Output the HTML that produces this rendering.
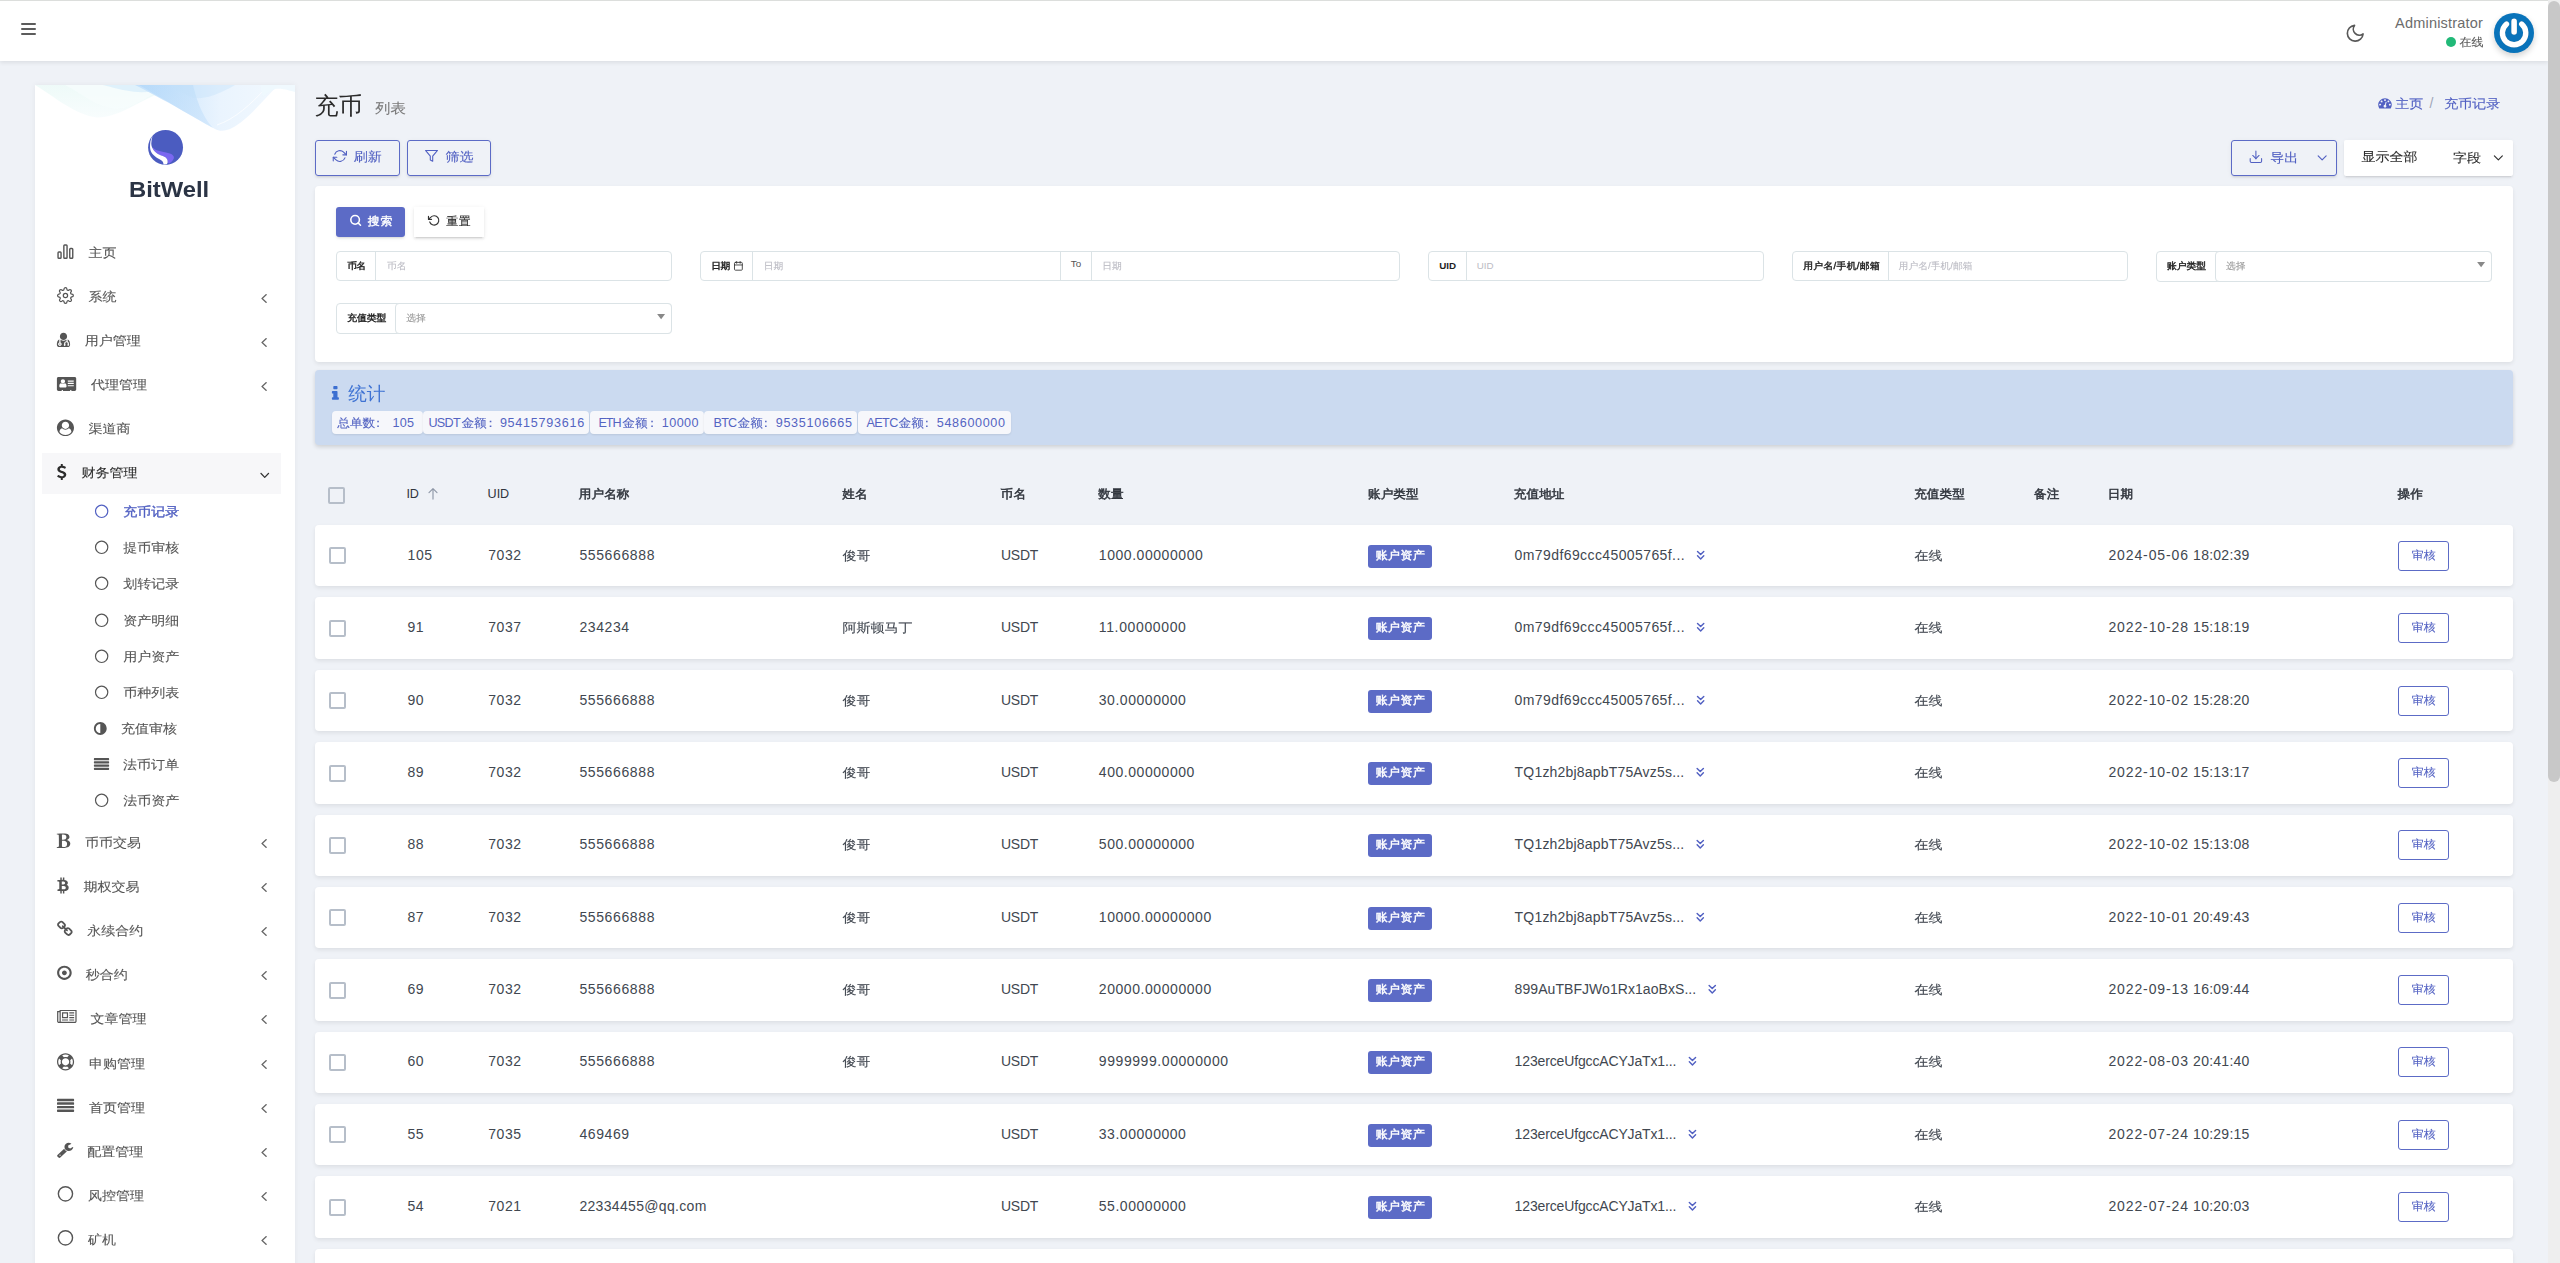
<!DOCTYPE html>
<html lang="zh-CN"><head><meta charset="utf-8"><title>充币</title><style>
html,body{margin:0;padding:0;}
body{width:2560px;height:1263px;overflow:hidden;position:relative;background:#eff2f7;font-family:"Liberation Sans", "WenQuanYi Zen Hei", sans-serif;color:#414750;}
.b{position:absolute;box-sizing:border-box;}
.t{position:absolute;white-space:nowrap;display:block;}
.ic{position:absolute;display:block;overflow:visible;}
.z6{position:absolute;left:0;top:0;width:2560px;height:0;z-index:7;}
</style></head>
<body>
<div class="b" style="left:0.00px;top:0.00px;width:2548.00px;height:61.00px;background:#fff;box-shadow:0 2px 4px 0 rgba(0,0,0,.08);z-index:5;"></div>
<div class="b" style="left:0.00px;top:0.00px;width:2548.00px;height:1.00px;background:#dcdedc;z-index:6;"></div>
<div class="z6">
<div class="b" style="left:21.00px;top:23.00px;width:14.60px;height:2.00px;background:#5c5c5c;border-radius:1px;"></div>
<div class="b" style="left:21.00px;top:28.00px;width:14.60px;height:2.00px;background:#5c5c5c;border-radius:1px;"></div>
<div class="b" style="left:21.00px;top:33.00px;width:14.60px;height:2.00px;background:#5c5c5c;border-radius:1px;"></div>
<svg class="ic" style="left:2343px;top:21px;" width="24" height="24" viewBox="0 0 24 24"><g transform="translate(1.70 1.80) scale(0.8750)" fill="none" stroke="#585858" stroke-width="1.9" stroke-linecap="round" stroke-linejoin="round"><path d="M21 12.79A9 9 0 1 1 11.21 3 7 7 0 0 0 21 12.79z"/></g></svg>
<span class="t" style="top:12.30px;font-size:14.5px;line-height:22px;color:#6c6c6c;right:77.00px;letter-spacing:0.190px;">Administrator</span>
<div class="b" style="left:2446.00px;top:37.00px;width:10.00px;height:10.00px;background:#21b978;border-radius:50%;"></div>
<span class="t" style="top:32.80px;font-size:12px;line-height:18px;color:#5c5c5c;right:76.50px;-webkit-text-stroke:0.12px currentColor;transform:scaleY(0.95);">在线</span>
<div class="b" style="left:2494.00px;top:13.00px;width:40.00px;height:40.00px;background:#0973ba;border-radius:50%;box-shadow:0 3px 6px rgba(0,0,0,.18);"></div>
<svg class="ic" style="left:2494px;top:13px" width="40" height="40" viewBox="0 0 40 40"><g filter="drop-shadow(0.6px 0.8px 0.7px rgba(0,0,0,.35))"><path d="M27.7 11.1 A11.7 11.7 0 1 1 12.5 11.1" fill="none" stroke="#fff" stroke-width="5.4" stroke-linecap="round"/><rect x="17.3" y="5.6" width="5.6" height="16.2" rx="2.8" fill="#fff"/></g></svg>
</div>
<div class="b" style="left:35.00px;top:85.00px;width:260.00px;height:1200.00px;background:#fff;box-shadow:0 0 6px rgba(0,0,0,.06);"></div>
<svg class="ic" style="left:35px;top:85px;overflow:hidden" width="260" height="52" viewBox="0 0 260 52">
<defs><linearGradient id="wg1" x1="0" y1="0" x2="0" y2="1"><stop offset="0" stop-color="#e3f7f4"/><stop offset="1" stop-color="#f3fbfc"/></linearGradient>
<linearGradient id="wg2" x1="0" y1="0" x2="1" y2="0"><stop offset="0" stop-color="#c2e0fb"/><stop offset=".4" stop-color="#dcedfd"/><stop offset=".6" stop-color="#eaf4fe"/><stop offset="1" stop-color="#f1f8fe"/></linearGradient>
<linearGradient id="wg3" x1="0" y1="0" x2="1" y2="1"><stop offset="0" stop-color="#a9d3f8"/><stop offset="1" stop-color="#c4e0fb"/></linearGradient></defs>
<path d="M0 0 C20 12 40 30 62 32.5 C85 32 100 18 125 8 L140 0 Z" fill="url(#wg1)" opacity=".6"/>
<path d="M30 0 C50 10 60 22 82 24 C100 22 108 14 122 7 L132 0 Z" fill="#f6fdfd" opacity=".8"/>
<path d="M68 0 C90 6 105 9 118 6 L128 0 Z" fill="#d6ecfb" opacity=".7"/>
<path d="M100 0 L243 0 C226 18 211 36 197 43 C191 46 185 47 180 44 C160 33 130 15 100 0 Z" fill="url(#wg2)"/>
<path d="M104 0 L158 0 C161 12 166 30 178 43 C160 33 130 15 104 0 Z" fill="url(#wg3)" opacity=".5"/>
<path d="M135 0 L200 0 C185 9 170 14 160 13 C150 10 142 5 135 0 Z" fill="#c3e0fa" opacity=".4"/>
<path d="M182 40 C200 34 215 20 232 2" fill="none" stroke="#fff" stroke-width="0.8" opacity=".9"/>
<path d="M225 0 L260 0 L260 7 C250 4 245 3 240 4 C236 6 232 8 228 12 Z" fill="#eef8fe" opacity=".9"/>
</svg>
<svg class="ic" style="left:147px;top:129px" width="38" height="37" viewBox="0 0 38 37"><g transform="translate(1.10 1.00)"><circle cx="17.45" cy="17.45" r="17.45" fill="#4b5cc0"/>
<path d="M4.7 17.6 C6 19.2 8 20.2 10.5 20.8 C13 21.5 15.5 21.9 17.9 22.4 C20 22.8 21.8 23.2 23.2 23.9 C24.6 24.7 25.5 25.8 25.8 27.1 C25.9 27.9 25.7 28.6 25.3 29.2 C24.8 30.2 24.1 31.1 23.2 31.9 C22.6 32.5 21.9 33 21.1 33.4 L19.5 32.4 C19.7 31.2 19.5 30.2 19 29.2 C18.2 27.8 16.8 26.9 14.8 26.1 C12.5 25.2 10.2 24.3 8.4 22.9 C6.8 21.8 5.5 20.5 4.7 18.7 Z" fill="#7b68f0"/>
<path d="M4.4 6.0 C3.0 8.5 2.2 11 2.1 13.4 C1.9 15.5 1.9 17 2.1 18.7 C2.4 20.8 3.1 22.4 4.4 23.9 C6 25.8 8 27.3 10.5 28.7 C12.5 29.8 14 30.6 14.8 31.9 C15.3 32.8 15.4 33.6 15.3 34.6 L17.9 34.6 C19 33.8 19.6 33.2 19.5 32.4 C19.7 31.2 19.5 30.2 19 29.2 C18.2 27.8 16.8 26.9 14.8 26.1 C12.5 25.2 10.2 24.3 8.4 22.9 C6.8 21.8 5.5 20.5 4.7 18.7 C3.8 17 3.2 15.3 3.2 13.4 C3.3 11 3.7 8.5 4.4 6.0 Z" fill="#fff"/></g></svg>
<span class="t" style="top:174.50px;font-size:21.8px;line-height:30px;color:#2b3445;left:128.90px;font-weight:700;transform:scaleX(1.092);transform-origin:0 50%;">BitWell</span>
<svg class="ic" style="left:55px;top:242px" width="21" height="19" viewBox="0 0 21 19"><g transform="translate(1.65 1.85)"><g fill="none" stroke="#555" stroke-width="1.4"><rect x="1.4" y="8.2" width="3" height="6.2" rx="0.8"/><rect x="7.2" y="1.2" width="3.2" height="13.2" rx="0.8"/><rect x="13.1" y="4.6" width="3" height="9.8" rx="0.8"/></g></g></svg>
<span class="t" style="top:241.80px;font-size:14px;line-height:21px;color:#555;left:88.50px;-webkit-text-stroke:0.12px currentColor;transform:scaleY(0.9);">主页</span>
<svg class="ic" style="left:55px;top:285px;" width="21" height="21" viewBox="0 0 21 21"><g transform="translate(1.85 1.95) scale(0.7167)" fill="none" stroke="#555" stroke-width="1.7" stroke-linecap="round" stroke-linejoin="round"><circle cx="12" cy="12" r="3"/><path d="M19.4 15a1.65 1.65 0 0 0 .33 1.82l.06.06a2 2 0 0 1 0 2.83 2 2 0 0 1-2.83 0l-.06-.06a1.65 1.65 0 0 0-1.82-.33 1.65 1.65 0 0 0-1 1.51V21a2 2 0 0 1-2 2 2 2 0 0 1-2-2v-.09A1.65 1.65 0 0 0 9 19.4a1.65 1.65 0 0 0-1.82.33l-.06.06a2 2 0 0 1-2.83 0 2 2 0 0 1 0-2.83l.06-.06a1.65 1.65 0 0 0 .33-1.82 1.65 1.65 0 0 0-1.51-1H3a2 2 0 0 1-2-2 2 2 0 0 1 2-2h.09A1.65 1.65 0 0 0 4.6 9a1.65 1.65 0 0 0-.33-1.82l-.06-.06a2 2 0 0 1 0-2.83 2 2 0 0 1 2.83 0l.06.06a1.65 1.65 0 0 0 1.82.33H9a1.65 1.65 0 0 0 1-1.51V3a2 2 0 0 1 2-2 2 2 0 0 1 2 2v.09a1.65 1.65 0 0 0 1 1.51 1.65 1.65 0 0 0 1.82-.33l.06-.06a2 2 0 0 1 2.83 0 2 2 0 0 1 0 2.83l-.06.06a1.65 1.65 0 0 0-.33 1.82V9a1.65 1.65 0 0 0 1.51 1H21a2 2 0 0 1 2 2 2 2 0 0 1-2 2h-.09a1.65 1.65 0 0 0-1.51 1z"/></g></svg>
<span class="t" style="top:285.80px;font-size:14px;line-height:21px;color:#555;left:88.50px;-webkit-text-stroke:0.12px currentColor;transform:scaleY(0.9);">系统</span>
<svg class="ic" style="left:260px;top:293px;" width="8" height="11" viewBox="0 0 8 11"><path fill="#666" d="M6.9 1.75C6.9 1.67 6.86 1.6 6.8 1.54L6.32 1.09C6.26 1.04 6.18 1 6.1 1C6.02 1 5.94 1.04 5.88 1.09L1.4 5.29C1.34 5.35 1.3 5.43 1.3 5.5C1.3 5.57 1.34 5.65 1.4 5.71L5.88 9.91C5.94 9.96 6.02 10 6.1 10C6.18 10 6.26 9.96 6.32 9.91L6.8 9.46C6.86 9.4 6.9 9.32 6.9 9.25C6.9 9.18 6.86 9.1 6.8 9.04L3.02 5.5L6.8 1.96C6.86 1.9 6.9 1.82 6.9 1.75Z"/></svg>
<svg class="ic" style="left:55px;top:331px;" width="17" height="18" viewBox="0 0 17 18"><path fill="#555" d="M5.5 13.12C5.5 12.79 5.23 12.53 4.9 12.53C4.57 12.53 4.3 12.79 4.3 13.12C4.3 13.45 4.57 13.72 4.9 13.72C5.23 13.72 5.5 13.45 5.5 13.12ZM15.1 13.69C15.1 11.84 14.72 8.91 12.49 8.43C12.77 9.06 12.7 9.79 12.7 10.47C13.44 10.89 13.9 11.68 13.9 12.53V13.35C14.09 13.52 14.2 13.76 14.2 14.01C14.2 14.51 13.8 14.91 13.3 14.91C12.8 14.91 12.4 14.51 12.4 14.01C12.4 13.76 12.51 13.52 12.7 13.35V12.53C12.7 11.87 12.16 11.33 11.5 11.33C10.84 11.33 10.3 11.87 10.3 12.53V13.35C10.49 13.52 10.6 13.76 10.6 14.01C10.6 14.51 10.2 14.91 9.7 14.91C9.2 14.91 8.8 14.51 8.8 14.01C8.8 13.76 8.91 13.52 9.1 13.35V12.53C9.1 11.21 10.18 10.14 11.5 10.14V9.55C11.5 9.24 11.47 8.93 11.27 8.68C10.48 9.29 9.5 9.65 8.5 9.65C7.5 9.65 6.52 9.29 5.73 8.68C5.53 8.93 5.5 9.24 5.5 9.55V11.44C6.21 11.69 6.7 12.37 6.7 13.12C6.7 14.11 5.89 14.91 4.9 14.91C3.91 14.91 3.1 14.11 3.1 13.12C3.1 12.37 3.58 11.69 4.3 11.44V9.55C4.3 9.16 4.36 8.78 4.51 8.43C2.27 8.91 1.9 11.84 1.9 13.69C1.9 15.21 2.9 16.1 4.4 16.1H12.6C14.1 16.1 15.1 15.21 15.1 13.69ZM12.1 5.38C12.1 3.4 10.49 1.8 8.5 1.8C6.51 1.8 4.9 3.4 4.9 5.38C4.9 7.35 6.51 8.95 8.5 8.95C10.49 8.95 12.1 7.35 12.1 5.38Z"/></svg>
<span class="t" style="top:329.80px;font-size:14px;line-height:21px;color:#555;left:84.80px;-webkit-text-stroke:0.12px currentColor;transform:scaleY(0.9);">用户管理</span>
<svg class="ic" style="left:260px;top:337px;" width="8" height="11" viewBox="0 0 8 11"><path fill="#666" d="M6.9 1.75C6.9 1.67 6.86 1.6 6.8 1.54L6.32 1.09C6.26 1.04 6.18 1 6.1 1C6.02 1 5.94 1.04 5.88 1.09L1.4 5.29C1.34 5.35 1.3 5.43 1.3 5.5C1.3 5.57 1.34 5.65 1.4 5.71L5.88 9.91C5.94 9.96 6.02 10 6.1 10C6.18 10 6.26 9.96 6.32 9.91L6.8 9.46C6.86 9.4 6.9 9.32 6.9 9.25C6.9 9.18 6.86 9.1 6.8 9.04L3.02 5.5L6.8 1.96C6.86 1.9 6.9 1.82 6.9 1.75Z"/></svg>
<svg class="ic" style="left:55px;top:375px;" width="23" height="18" viewBox="0 0 23 18"><path fill="#555" d="M11.55 11.17C11.55 11.98 11.01 12.55 10.34 12.55H5.52C4.85 12.55 4.31 11.98 4.31 11.17C4.31 9.74 4.67 8.15 6.16 8.15C6.62 8.41 7.24 8.85 7.93 8.85C8.62 8.85 9.24 8.41 9.7 8.15C11.19 8.15 11.55 9.74 11.55 11.17ZM10.07 6.37C10.07 7.53 9.11 8.46 7.93 8.46C6.75 8.46 5.79 7.53 5.79 6.37C5.79 5.21 6.75 4.27 7.93 4.27C9.11 4.27 10.07 5.21 10.07 6.37ZM18.79 11.07C18.79 11.24 18.66 11.37 18.49 11.37H13.06C12.89 11.37 12.76 11.24 12.76 11.07V10.48C12.76 10.31 12.89 10.18 13.06 10.18H18.49C18.66 10.18 18.79 10.31 18.79 10.48V11.07ZM18.79 8.67C18.79 8.85 18.64 9 18.45 9H13.1C12.91 9 12.76 8.85 12.76 8.67V8.15C12.76 7.96 12.91 7.82 13.1 7.82H18.45C18.64 7.82 18.79 7.96 18.79 8.15V8.67ZM18.79 6.34C18.79 6.5 18.66 6.63 18.49 6.63H13.06C12.89 6.63 12.76 6.5 12.76 6.34V5.75C12.76 5.58 12.89 5.45 13.06 5.45H18.49C18.66 5.45 18.79 5.58 18.79 5.75V6.34ZM21.2 3.38C21.2 2.57 20.52 1.9 19.69 1.9H3.41C2.58 1.9 1.9 2.57 1.9 3.38V14.62C1.9 15.43 2.58 16.1 3.41 16.1H6.72V15.21C6.72 15.05 6.86 14.92 7.03 14.92H7.63C7.8 14.92 7.93 15.05 7.93 15.21V16.1H15.17V15.21C15.17 15.05 15.3 14.92 15.47 14.92H16.07C16.24 14.92 16.38 15.05 16.38 15.21V16.1H19.69C20.52 16.1 21.2 15.43 21.2 14.62Z"/></svg>
<span class="t" style="top:373.80px;font-size:14px;line-height:21px;color:#555;left:91.00px;-webkit-text-stroke:0.12px currentColor;transform:scaleY(0.9);">代理管理</span>
<svg class="ic" style="left:260px;top:381px;" width="8" height="11" viewBox="0 0 8 11"><path fill="#666" d="M6.9 1.75C6.9 1.67 6.86 1.6 6.8 1.54L6.32 1.09C6.26 1.04 6.18 1 6.1 1C6.02 1 5.94 1.04 5.88 1.09L1.4 5.29C1.34 5.35 1.3 5.43 1.3 5.5C1.3 5.57 1.34 5.65 1.4 5.71L5.88 9.91C5.94 9.96 6.02 10 6.1 10C6.18 10 6.26 9.96 6.32 9.91L6.8 9.46C6.86 9.4 6.9 9.32 6.9 9.25C6.9 9.18 6.86 9.1 6.8 9.04L3.02 5.5L6.8 1.96C6.86 1.9 6.9 1.82 6.9 1.75Z"/></svg>
<svg class="ic" style="left:55px;top:418px;" width="20" height="20" viewBox="0 0 20 20"><path fill="#555" d="M16.43 13.88C15.11 15.7 12.92 16.91 10.45 16.91C7.98 16.91 5.79 15.7 4.47 13.88C4.72 12.14 5.44 10.59 7.06 10.37C7.9 11.27 9.11 11.84 10.45 11.84C11.79 11.84 13 11.27 13.84 10.37C15.46 10.59 16.18 12.14 16.43 13.88ZM14.11 7.36C14.11 9.34 12.47 10.94 10.45 10.94C8.43 10.94 6.79 9.34 6.79 7.36C6.79 5.39 8.43 3.79 10.45 3.79C12.47 3.79 14.11 5.39 14.11 7.36ZM19 9.75C19 5.14 15.17 1.4 10.45 1.4C5.73 1.4 1.9 5.14 1.9 9.75C1.9 14.35 5.73 18.1 10.45 18.1C15.18 18.1 19 14.34 19 9.75Z"/></svg>
<span class="t" style="top:417.80px;font-size:14px;line-height:21px;color:#555;left:88.50px;-webkit-text-stroke:0.12px currentColor;transform:scaleY(0.9);">渠道商</span>
<div class="b" style="left:42.30px;top:453.30px;width:238.50px;height:40.30px;background:#f7f7f9;"></div>
<svg class="ic" style="left:56px;top:462px;" width="12" height="20" viewBox="0 0 12 20"><path fill="#2c2c2c" d="M10.3 12.61C10.3 10.43 8.25 9.7 6.43 9.06C5.03 8.56 3.83 8.14 3.83 7.18C3.83 6.36 4.69 5.79 5.95 5.79C7.43 5.79 8.62 6.75 8.63 6.76C8.71 6.82 8.8 6.84 8.9 6.83C9 6.82 9.08 6.76 9.13 6.68L9.92 5.36C9.99 5.25 9.97 5.12 9.88 5.02C9.84 4.98 8.77 3.99 6.77 3.78V2.19C6.77 2.03 6.63 1.9 6.45 1.9H5.12C4.95 1.9 4.8 2.03 4.8 2.19V3.82C2.74 4.18 1.32 5.55 1.32 7.22C1.32 9.48 3.53 10.3 5.31 10.94C6.64 11.43 7.8 11.85 7.8 12.72C7.8 13.74 6.76 14.21 5.79 14.21C4.04 14.21 2.66 13 2.64 12.99C2.58 12.93 2.49 12.9 2.4 12.91C2.32 12.92 2.23 12.96 2.18 13.02L1.16 14.24C1.07 14.35 1.08 14.5 1.18 14.61C1.23 14.66 2.49 15.93 4.8 16.23V17.81C4.8 17.97 4.95 18.1 5.12 18.1H6.45C6.63 18.1 6.77 17.97 6.77 17.81V16.23C8.86 15.91 10.3 14.46 10.3 12.61Z"/></svg>
<span class="t" style="top:461.80px;font-size:14px;line-height:21px;color:#2c2c2c;left:81.40px;-webkit-text-stroke:0.12px currentColor;transform:scaleY(0.9);">财务管理</span>
<svg class="ic" style="left:259px;top:471px;" width="12" height="9" viewBox="0 0 12 9"><path fill="#333" d="M10.2 2.47C10.2 2.4 10.16 2.31 10.11 2.26L9.66 1.79C9.61 1.74 9.53 1.7 9.46 1.7C9.39 1.7 9.31 1.74 9.25 1.79L5.75 5.44L2.25 1.79C2.19 1.74 2.11 1.7 2.04 1.7C1.96 1.7 1.89 1.74 1.84 1.79L1.39 2.26C1.34 2.31 1.3 2.4 1.3 2.47C1.3 2.54 1.34 2.63 1.39 2.68L5.54 7.01C5.6 7.06 5.68 7.1 5.75 7.1C5.82 7.1 5.9 7.06 5.96 7.01L10.11 2.68C10.16 2.63 10.2 2.54 10.2 2.47Z"/></svg>
<svg class="ic" style="left:91px;top:501px" width="21" height="21" viewBox="0 0 21 21"><g transform="translate(1.65 1.35)"><circle cx="9" cy="9" r="6.15" fill="none" stroke="#5160c2" stroke-width="1.2"/></g></svg>
<span class="t" style="top:500.80px;font-size:14px;line-height:21px;color:#5160c2;left:123.30px;-webkit-text-stroke:0.39px currentColor;transform:scaleY(0.9);">充币记录</span>
<svg class="ic" style="left:91px;top:537px" width="21" height="21" viewBox="0 0 21 21"><g transform="translate(1.65 1.35)"><circle cx="9" cy="9" r="6.15" fill="none" stroke="#555" stroke-width="1.2"/></g></svg>
<span class="t" style="top:536.80px;font-size:14px;line-height:21px;color:#555;left:123.30px;-webkit-text-stroke:0.12px currentColor;transform:scaleY(0.9);">提币审核</span>
<svg class="ic" style="left:91px;top:573px" width="21" height="21" viewBox="0 0 21 21"><g transform="translate(1.65 1.35)"><circle cx="9" cy="9" r="6.15" fill="none" stroke="#555" stroke-width="1.2"/></g></svg>
<span class="t" style="top:572.80px;font-size:14px;line-height:21px;color:#555;left:123.30px;-webkit-text-stroke:0.12px currentColor;transform:scaleY(0.9);">划转记录</span>
<svg class="ic" style="left:91px;top:610px" width="21" height="21" viewBox="0 0 21 21"><g transform="translate(1.65 1.35)"><circle cx="9" cy="9" r="6.15" fill="none" stroke="#555" stroke-width="1.2"/></g></svg>
<span class="t" style="top:609.80px;font-size:14px;line-height:21px;color:#555;left:123.30px;-webkit-text-stroke:0.12px currentColor;transform:scaleY(0.9);">资产明细</span>
<svg class="ic" style="left:91px;top:646px" width="21" height="21" viewBox="0 0 21 21"><g transform="translate(1.65 1.35)"><circle cx="9" cy="9" r="6.15" fill="none" stroke="#555" stroke-width="1.2"/></g></svg>
<span class="t" style="top:645.80px;font-size:14px;line-height:21px;color:#555;left:123.30px;-webkit-text-stroke:0.12px currentColor;transform:scaleY(0.9);">用户资产</span>
<svg class="ic" style="left:91px;top:682px" width="21" height="21" viewBox="0 0 21 21"><g transform="translate(1.65 1.35)"><circle cx="9" cy="9" r="6.15" fill="none" stroke="#555" stroke-width="1.2"/></g></svg>
<span class="t" style="top:681.80px;font-size:14px;line-height:21px;color:#555;left:123.30px;-webkit-text-stroke:0.12px currentColor;transform:scaleY(0.9);">币种列表</span>
<svg class="ic" style="left:92px;top:721px;" width="16" height="15" viewBox="0 0 16 15"><path fill="#555" d="M8.3 12.02C5.8 12.02 3.77 9.97 3.77 7.45C3.77 4.93 5.8 2.88 8.3 2.88V12.02ZM14.7 7.45C14.7 3.89 11.83 1 8.3 1C4.77 1 1.9 3.89 1.9 7.45C1.9 11.01 4.77 13.9 8.3 13.9C11.83 13.9 14.7 11.01 14.7 7.45Z"/></svg>
<span class="t" style="top:717.80px;font-size:14px;line-height:21px;color:#555;left:120.90px;-webkit-text-stroke:0.12px currentColor;transform:scaleY(0.9);">充值审核</span>
<svg class="ic" style="left:92px;top:757px;" width="19" height="14" viewBox="0 0 19 14"><path fill="#555" d="M17.1 11.29C17.1 11 16.85 10.75 16.56 10.75H2.44C2.15 10.75 1.9 11 1.9 11.29V12.36C1.9 12.66 2.15 12.9 2.44 12.9H16.56C16.85 12.9 17.1 12.66 17.1 12.36ZM17.1 8.07C17.1 7.78 16.85 7.54 16.56 7.54H2.44C2.15 7.54 1.9 7.78 1.9 8.07V9.15C1.9 9.44 2.15 9.68 2.44 9.68H16.56C16.85 9.68 17.1 9.44 17.1 9.15ZM17.1 4.85C17.1 4.56 16.85 4.32 16.56 4.32H2.44C2.15 4.32 1.9 4.56 1.9 4.85V5.93C1.9 6.22 2.15 6.46 2.44 6.46H16.56C16.85 6.46 17.1 6.22 17.1 5.93ZM17.1 1.64C17.1 1.34 16.85 1.1 16.56 1.1H2.44C2.15 1.1 1.9 1.34 1.9 1.64V2.71C1.9 3 2.15 3.25 2.44 3.25H16.56C16.85 3.25 17.1 3 17.1 2.71Z"/></svg>
<span class="t" style="top:753.80px;font-size:14px;line-height:21px;color:#555;left:123.00px;-webkit-text-stroke:0.12px currentColor;transform:scaleY(0.9);">法币订单</span>
<svg class="ic" style="left:91px;top:790px" width="21" height="21" viewBox="0 0 21 21"><g transform="translate(1.65 1.35)"><circle cx="9" cy="9" r="6.15" fill="none" stroke="#555" stroke-width="1.2"/></g></svg>
<span class="t" style="top:789.80px;font-size:14px;line-height:21px;color:#555;left:123.30px;-webkit-text-stroke:0.12px currentColor;transform:scaleY(0.9);">法币资产</span>
<svg class="ic" style="left:55px;top:832px;" width="17" height="18" viewBox="0 0 17 18"><path fill="#555" d="M7.12 14.75C6.89 14.2 6.98 12.44 6.98 11.79C6.98 10.79 6.99 9.79 6.99 8.79C7.26 8.7 7.67 8.7 7.96 8.7C9.5 8.7 10.78 8.77 11.68 10.19C11.99 10.69 12.07 11.3 12.07 11.89C12.07 14.19 10.65 15.05 8.46 15.05C8 15.05 7.54 14.93 7.12 14.75ZM6.99 7.71C6.98 7.49 6.98 7.27 6.98 7.06C6.98 6.56 6.99 6.06 6.99 5.56C6.99 4.6 6.91 3.65 6.91 2.7C7.32 2.63 7.74 2.57 8.16 2.57C9.76 2.57 11.42 3.2 11.42 5.05C11.42 7.23 10.01 7.77 8.03 7.77C7.69 7.77 7.33 7.76 6.99 7.71ZM1.8 16.1C3.51 16.03 5.24 15.88 6.96 15.88C7.8 15.88 8.65 15.94 9.49 15.94C12.3 15.94 15.3 14.86 15.3 11.62C15.3 9.63 13.68 8.42 11.86 8.01C13.21 7.41 14.51 6.77 14.51 5.08C14.51 2.63 12.13 1.61 9.96 1.61C9.53 1.61 9.09 1.6 8.66 1.6C6.38 1.6 4.1 1.76 1.82 1.8L1.86 2.58C2.17 2.62 3.58 2.69 3.73 2.96C3.96 3.4 3.94 12.43 3.94 12.64C3.94 13.27 3.99 14.25 3.65 14.81C3.06 15.05 2.43 15.06 1.82 15.21L1.8 16.1Z"/></svg>
<span class="t" style="top:831.80px;font-size:14px;line-height:21px;color:#555;left:85.00px;-webkit-text-stroke:0.12px currentColor;transform:scaleY(0.9);">币币交易</span>
<svg class="ic" style="left:260px;top:838px;" width="8" height="11" viewBox="0 0 8 11"><path fill="#666" d="M6.9 1.75C6.9 1.67 6.86 1.6 6.8 1.54L6.32 1.09C6.26 1.04 6.18 1 6.1 1C6.02 1 5.94 1.04 5.88 1.09L1.4 5.29C1.34 5.35 1.3 5.43 1.3 5.5C1.3 5.57 1.34 5.65 1.4 5.71L5.88 9.91C5.94 9.96 6.02 10 6.1 10C6.18 10 6.26 9.96 6.32 9.91L6.8 9.46C6.86 9.4 6.9 9.32 6.9 9.25C6.9 9.18 6.86 9.1 6.8 9.04L3.02 5.5L6.8 1.96C6.86 1.9 6.9 1.82 6.9 1.75Z"/></svg>
<svg class="ic" style="left:56px;top:876px;" width="14" height="19" viewBox="0 0 14 19"><path fill="#555" d="M11.84 6.42C11.68 4.67 10.21 4.09 8.35 3.92V1.5H6.9V3.86C6.52 3.86 6.14 3.87 5.75 3.88V1.5H4.3V3.92C3.99 3.93 3.68 3.93 3.39 3.93L1.4 3.92V5.5C2.46 5.48 2.44 5.5 2.44 5.5C3.04 5.5 3.22 5.85 3.28 6.15V8.91C3.32 8.91 3.37 8.91 3.43 8.92C3.38 8.92 3.33 8.92 3.28 8.92V12.79C3.25 12.98 3.14 13.28 2.73 13.28C2.73 13.28 2.75 13.3 1.69 13.28L1.4 15.04H3.28C3.63 15.04 3.97 15.05 4.3 15.05V17.5H5.75V15.08C6.15 15.09 6.53 15.09 6.9 15.09V17.5H8.35V15.05C10.77 14.91 12.46 14.29 12.68 11.95C12.85 10.08 11.98 9.24 10.61 8.9C11.44 8.47 11.96 7.7 11.84 6.42ZM9.82 11.66C9.82 13.5 6.76 13.29 5.78 13.29V10.04C6.76 10.04 9.82 9.76 9.82 11.66ZM9.15 7.09C9.15 8.75 6.6 8.56 5.78 8.56V5.61C6.6 5.61 9.15 5.35 9.15 7.09Z"/></svg>
<span class="t" style="top:875.80px;font-size:14px;line-height:21px;color:#555;left:83.60px;-webkit-text-stroke:0.12px currentColor;transform:scaleY(0.9);">期权交易</span>
<svg class="ic" style="left:260px;top:882px;" width="8" height="11" viewBox="0 0 8 11"><path fill="#666" d="M6.9 1.75C6.9 1.67 6.86 1.6 6.8 1.54L6.32 1.09C6.26 1.04 6.18 1 6.1 1C6.02 1 5.94 1.04 5.88 1.09L1.4 5.29C1.34 5.35 1.3 5.43 1.3 5.5C1.3 5.57 1.34 5.65 1.4 5.71L5.88 9.91C5.94 9.96 6.02 10 6.1 10C6.18 10 6.26 9.96 6.32 9.91L6.8 9.46C6.86 9.4 6.9 9.32 6.9 9.25C6.9 9.18 6.86 9.1 6.8 9.04L3.02 5.5L6.8 1.96C6.86 1.9 6.9 1.82 6.9 1.75Z"/></svg>
<svg class="ic" style="left:56px;top:919px;" width="18" height="18" viewBox="0 0 18 18"><path fill="#555" d="M14.78 12.88C14.78 13.11 14.68 13.33 14.51 13.5L13.11 14.86C12.94 15.02 12.71 15.1 12.47 15.1C12.23 15.1 11.99 15.02 11.82 14.85L9.87 12.92C9.7 12.76 9.6 12.52 9.6 12.29C9.6 12.01 9.71 11.8 9.91 11.61C10.23 11.92 10.49 12.28 10.98 12.28C11.48 12.28 11.89 11.88 11.89 11.39C11.89 10.91 11.52 10.65 11.21 10.34C11.4 10.15 11.61 10.05 11.89 10.05C12.13 10.05 12.36 10.14 12.54 10.31L14.51 12.24C14.68 12.41 14.78 12.63 14.78 12.88ZM8.1 6.31C8.1 6.59 7.99 6.8 7.79 6.99C7.47 6.68 7.21 6.32 6.72 6.32C6.22 6.32 5.81 6.72 5.81 7.21C5.81 7.69 6.18 7.95 6.49 8.26C6.3 8.45 6.09 8.55 5.81 8.55C5.57 8.55 5.34 8.46 5.16 8.29L3.19 6.36C3.02 6.19 2.92 5.97 2.92 5.72C2.92 5.49 3.02 5.27 3.19 5.1L4.59 3.74C4.76 3.58 4.99 3.49 5.23 3.49C5.47 3.49 5.71 3.58 5.88 3.75L7.83 5.68C8 5.84 8.1 6.08 8.1 6.31ZM16.6 12.88C16.6 12.16 16.32 11.49 15.8 10.98L13.83 9.04C13.31 8.54 12.61 8.26 11.89 8.26C11.14 8.26 10.44 8.55 9.91 9.08L9.08 8.26C9.61 7.74 9.91 7.05 9.91 6.31C9.91 5.6 9.64 4.92 9.13 4.42L7.17 2.49C6.66 1.98 5.96 1.7 5.23 1.7C4.51 1.7 3.82 1.97 3.3 2.47L1.91 3.83C1.39 4.33 1.1 5.02 1.1 5.72C1.1 6.44 1.38 7.11 1.9 7.62L3.87 9.56C4.39 10.06 5.09 10.34 5.81 10.34C6.56 10.34 7.26 10.05 7.79 9.52L8.62 10.34C8.09 10.86 7.79 11.55 7.79 12.29C7.79 13 8.06 13.68 8.57 14.18L10.53 16.11C11.04 16.62 11.74 16.9 12.47 16.9C13.19 16.9 13.88 16.63 14.4 16.13L15.79 14.77C16.31 14.27 16.6 13.58 16.6 12.88Z"/></svg>
<span class="t" style="top:919.80px;font-size:14px;line-height:21px;color:#555;left:87.20px;-webkit-text-stroke:0.12px currentColor;transform:scaleY(0.9);">永续合约</span>
<svg class="ic" style="left:260px;top:926px;" width="8" height="11" viewBox="0 0 8 11"><path fill="#666" d="M6.9 1.75C6.9 1.67 6.86 1.6 6.8 1.54L6.32 1.09C6.26 1.04 6.18 1 6.1 1C6.02 1 5.94 1.04 5.88 1.09L1.4 5.29C1.34 5.35 1.3 5.43 1.3 5.5C1.3 5.57 1.34 5.65 1.4 5.71L5.88 9.91C5.94 9.96 6.02 10 6.1 10C6.18 10 6.26 9.96 6.32 9.91L6.8 9.46C6.86 9.4 6.9 9.32 6.9 9.25C6.9 9.18 6.86 9.1 6.8 9.04L3.02 5.5L6.8 1.96C6.86 1.9 6.9 1.82 6.9 1.75Z"/></svg>
<svg class="ic" style="left:56px;top:964px;" width="17" height="17" viewBox="0 0 17 17"><path fill="#555" d="M10.83 8.85C10.83 7.56 9.74 6.5 8.4 6.5C7.06 6.5 5.97 7.56 5.97 8.85C5.97 10.14 7.06 11.2 8.4 11.2C9.74 11.2 10.83 10.14 10.83 8.85ZM8.4 3.86C11.25 3.86 13.57 6.1 13.57 8.85C13.57 11.6 11.25 13.84 8.4 13.84C5.55 13.84 3.23 11.6 3.23 8.85C3.23 6.1 5.55 3.86 8.4 3.86ZM15.7 8.85C15.7 4.96 12.43 1.8 8.4 1.8C4.37 1.8 1.1 4.96 1.1 8.85C1.1 12.74 4.37 15.9 8.4 15.9C12.43 15.9 15.7 12.74 15.7 8.85Z"/></svg>
<span class="t" style="top:963.80px;font-size:14px;line-height:21px;color:#555;left:85.80px;-webkit-text-stroke:0.12px currentColor;transform:scaleY(0.9);">秒合约</span>
<svg class="ic" style="left:260px;top:970px;" width="8" height="11" viewBox="0 0 8 11"><path fill="#666" d="M6.9 1.75C6.9 1.67 6.86 1.6 6.8 1.54L6.32 1.09C6.26 1.04 6.18 1 6.1 1C6.02 1 5.94 1.04 5.88 1.09L1.4 5.29C1.34 5.35 1.3 5.43 1.3 5.5C1.3 5.57 1.34 5.65 1.4 5.71L5.88 9.91C5.94 9.96 6.02 10 6.1 10C6.18 10 6.26 9.96 6.32 9.91L6.8 9.46C6.86 9.4 6.9 9.32 6.9 9.25C6.9 9.18 6.86 9.1 6.8 9.04L3.02 5.5L6.8 1.96C6.86 1.9 6.9 1.82 6.9 1.75Z"/></svg>
<svg class="ic" style="left:56px;top:1008px;" width="22" height="16" viewBox="0 0 22 16"><path fill="#555" d="M10.85 5.47V9.05H7.19V5.47H10.85ZM12.07 11.43H5.97V12.62H12.07ZM12.07 4.28H5.97V10.24H12.07ZM18.16 11.43H13.29V12.62H18.16ZM18.16 9.05H13.29V10.24H18.16ZM18.16 6.66H13.29V7.85H18.16ZM18.16 4.28H13.29V5.47H18.16ZM3.54 13.21C3.54 13.54 3.26 13.81 2.93 13.81C2.59 13.81 2.32 13.54 2.32 13.21V4.28H3.54V13.21ZM19.38 13.21C19.38 13.54 19.11 13.81 18.77 13.81H4.65C4.72 13.62 4.76 13.42 4.76 13.21V3.09H19.38V13.21ZM20.6 1.9H3.54V3.09H1.1V13.21C1.1 14.2 1.92 15 2.93 15H18.77C19.78 15 20.6 14.2 20.6 13.21Z"/></svg>
<span class="t" style="top:1007.80px;font-size:14px;line-height:21px;color:#555;left:90.50px;-webkit-text-stroke:0.12px currentColor;transform:scaleY(0.9);">文章管理</span>
<svg class="ic" style="left:260px;top:1014px;" width="8" height="11" viewBox="0 0 8 11"><path fill="#666" d="M6.9 1.75C6.9 1.67 6.86 1.6 6.8 1.54L6.32 1.09C6.26 1.04 6.18 1 6.1 1C6.02 1 5.94 1.04 5.88 1.09L1.4 5.29C1.34 5.35 1.3 5.43 1.3 5.5C1.3 5.57 1.34 5.65 1.4 5.71L5.88 9.91C5.94 9.96 6.02 10 6.1 10C6.18 10 6.26 9.96 6.32 9.91L6.8 9.46C6.86 9.4 6.9 9.32 6.9 9.25C6.9 9.18 6.86 9.1 6.8 9.04L3.02 5.5L6.8 1.96C6.86 1.9 6.9 1.82 6.9 1.75Z"/></svg>
<svg class="ic" style="left:56px;top:1052px;" width="20" height="20" viewBox="0 0 20 20"><path fill="#555" d="M9.55 1.3C4.83 1.3 1 5.13 1 9.85C1 14.57 4.83 18.4 9.55 18.4C14.27 18.4 18.1 14.57 18.1 9.85C18.1 5.13 14.27 1.3 9.55 1.3ZM9.55 2.52C10.79 2.52 11.96 2.84 12.99 3.38L11.14 5.23C10.64 5.06 10.11 4.96 9.55 4.96C9 4.96 8.46 5.06 7.96 5.23L6.11 3.38C7.14 2.84 8.31 2.52 9.55 2.52ZM3.08 13.29C2.54 12.26 2.22 11.09 2.22 9.85C2.22 8.61 2.54 7.44 3.08 6.41L4.93 8.26C4.76 8.76 4.66 9.29 4.66 9.85C4.66 10.4 4.76 10.94 4.93 11.44ZM9.55 17.18C8.31 17.18 7.14 16.86 6.11 16.32L7.96 14.47C8.46 14.64 9 14.74 9.55 14.74C10.11 14.74 10.64 14.64 11.14 14.47L12.99 16.32C11.96 16.86 10.79 17.18 9.55 17.18ZM9.55 13.51C7.53 13.51 5.89 11.87 5.89 9.85C5.89 7.83 7.53 6.19 9.55 6.19C11.57 6.19 13.21 7.83 13.21 9.85C13.21 11.87 11.57 13.51 9.55 13.51ZM14.17 11.44C14.34 10.94 14.44 10.4 14.44 9.85C14.44 9.3 14.34 8.76 14.17 8.26L16.02 6.41C16.56 7.44 16.88 8.61 16.88 9.85C16.88 11.09 16.56 12.26 16.02 13.29Z"/></svg>
<span class="t" style="top:1052.80px;font-size:14px;line-height:21px;color:#555;left:89.00px;-webkit-text-stroke:0.12px currentColor;transform:scaleY(0.9);">申购管理</span>
<svg class="ic" style="left:260px;top:1059px;" width="8" height="11" viewBox="0 0 8 11"><path fill="#666" d="M6.9 1.75C6.9 1.67 6.86 1.6 6.8 1.54L6.32 1.09C6.26 1.04 6.18 1 6.1 1C6.02 1 5.94 1.04 5.88 1.09L1.4 5.29C1.34 5.35 1.3 5.43 1.3 5.5C1.3 5.57 1.34 5.65 1.4 5.71L5.88 9.91C5.94 9.96 6.02 10 6.1 10C6.18 10 6.26 9.96 6.32 9.91L6.8 9.46C6.86 9.4 6.9 9.32 6.9 9.25C6.9 9.18 6.86 9.1 6.8 9.04L3.02 5.5L6.8 1.96C6.86 1.9 6.9 1.82 6.9 1.75Z"/></svg>
<svg class="ic" style="left:56px;top:1097px;" width="20" height="16" viewBox="0 0 20 16"><path fill="#555" d="M18.1 13.11C18.1 12.79 17.82 12.52 17.49 12.52H1.61C1.28 12.52 1 12.79 1 13.11V14.3C1 14.63 1.28 14.9 1.61 14.9H17.49C17.82 14.9 18.1 14.63 18.1 14.3ZM18.1 9.54C18.1 9.22 17.82 8.95 17.49 8.95H1.61C1.28 8.95 1 9.22 1 9.54V10.73C1 11.06 1.28 11.33 1.61 11.33H17.49C17.82 11.33 18.1 11.06 18.1 10.73ZM18.1 5.97C18.1 5.64 17.82 5.37 17.49 5.37H1.61C1.28 5.37 1 5.64 1 5.97V7.16C1 7.48 1.28 7.75 1.61 7.75H17.49C17.82 7.75 18.1 7.48 18.1 7.16ZM18.1 2.4C18.1 2.07 17.82 1.8 17.49 1.8H1.61C1.28 1.8 1 2.07 1 2.4V3.59C1 3.91 1.28 4.18 1.61 4.18H17.49C17.82 4.18 18.1 3.91 18.1 3.59Z"/></svg>
<span class="t" style="top:1096.80px;font-size:14px;line-height:21px;color:#555;left:89.00px;-webkit-text-stroke:0.12px currentColor;transform:scaleY(0.9);">首页管理</span>
<svg class="ic" style="left:260px;top:1103px;" width="8" height="11" viewBox="0 0 8 11"><path fill="#666" d="M6.9 1.75C6.9 1.67 6.86 1.6 6.8 1.54L6.32 1.09C6.26 1.04 6.18 1 6.1 1C6.02 1 5.94 1.04 5.88 1.09L1.4 5.29C1.34 5.35 1.3 5.43 1.3 5.5C1.3 5.57 1.34 5.65 1.4 5.71L5.88 9.91C5.94 9.96 6.02 10 6.1 10C6.18 10 6.26 9.96 6.32 9.91L6.8 9.46C6.86 9.4 6.9 9.32 6.9 9.25C6.9 9.18 6.86 9.1 6.8 9.04L3.02 5.5L6.8 1.96C6.86 1.9 6.9 1.82 6.9 1.75Z"/></svg>
<svg class="ic" style="left:56px;top:1141px;" width="19" height="18" viewBox="0 0 19 18"><path fill="#555" d="M4.66 14.15C4.66 14.47 4.38 14.74 4.03 14.74C3.69 14.74 3.41 14.47 3.41 14.15C3.41 13.83 3.69 13.56 4.03 13.56C4.38 13.56 4.66 13.83 4.66 14.15ZM10.98 10.29C9.69 9.81 8.66 8.85 8.15 7.65L1.47 13.9C1.24 14.12 1.1 14.43 1.1 14.74C1.1 15.05 1.24 15.36 1.47 15.57L2.51 16.56C2.75 16.77 3.07 16.9 3.41 16.9C3.74 16.9 4.06 16.77 4.29 16.56L10.98 10.29ZM17.2 6.29C17.2 6.11 17.08 5.97 16.89 5.97C16.69 5.97 14.41 7.31 14.09 7.49L12.2 6.51V4.45L15.07 2.89C15.16 2.84 15.23 2.74 15.23 2.64C15.23 2.53 15.17 2.44 15.07 2.38C14.47 2 13.54 1.8 12.82 1.8C10.4 1.8 8.43 3.65 8.43 5.92C8.43 8.19 10.4 10.03 12.82 10.03C14.68 10.03 16.36 8.9 16.97 7.27C17.08 6.97 17.2 6.6 17.2 6.29Z"/></svg>
<span class="t" style="top:1140.80px;font-size:14px;line-height:21px;color:#555;left:87.20px;-webkit-text-stroke:0.12px currentColor;transform:scaleY(0.9);">配置管理</span>
<svg class="ic" style="left:260px;top:1147px;" width="8" height="11" viewBox="0 0 8 11"><path fill="#666" d="M6.9 1.75C6.9 1.67 6.86 1.6 6.8 1.54L6.32 1.09C6.26 1.04 6.18 1 6.1 1C6.02 1 5.94 1.04 5.88 1.09L1.4 5.29C1.34 5.35 1.3 5.43 1.3 5.5C1.3 5.57 1.34 5.65 1.4 5.71L5.88 9.91C5.94 9.96 6.02 10 6.1 10C6.18 10 6.26 9.96 6.32 9.91L6.8 9.46C6.86 9.4 6.9 9.32 6.9 9.25C6.9 9.18 6.86 9.1 6.8 9.04L3.02 5.5L6.8 1.96C6.86 1.9 6.9 1.82 6.9 1.75Z"/></svg>
<svg class="ic" style="left:55px;top:1183px" width="21" height="21" viewBox="0 0 21 21"><g transform="translate(1.45 1.85)"><circle cx="9" cy="9" r="7.1" fill="none" stroke="#555" stroke-width="1.4"/></g></svg>
<span class="t" style="top:1184.80px;font-size:14px;line-height:21px;color:#555;left:88.00px;-webkit-text-stroke:0.12px currentColor;transform:scaleY(0.9);">风控管理</span>
<svg class="ic" style="left:260px;top:1191px;" width="8" height="11" viewBox="0 0 8 11"><path fill="#666" d="M6.9 1.75C6.9 1.67 6.86 1.6 6.8 1.54L6.32 1.09C6.26 1.04 6.18 1 6.1 1C6.02 1 5.94 1.04 5.88 1.09L1.4 5.29C1.34 5.35 1.3 5.43 1.3 5.5C1.3 5.57 1.34 5.65 1.4 5.71L5.88 9.91C5.94 9.96 6.02 10 6.1 10C6.18 10 6.26 9.96 6.32 9.91L6.8 9.46C6.86 9.4 6.9 9.32 6.9 9.25C6.9 9.18 6.86 9.1 6.8 9.04L3.02 5.5L6.8 1.96C6.86 1.9 6.9 1.82 6.9 1.75Z"/></svg>
<svg class="ic" style="left:55px;top:1227px" width="21" height="21" viewBox="0 0 21 21"><g transform="translate(1.45 1.85)"><circle cx="9" cy="9" r="7.1" fill="none" stroke="#555" stroke-width="1.4"/></g></svg>
<span class="t" style="top:1228.80px;font-size:14px;line-height:21px;color:#555;left:88.00px;-webkit-text-stroke:0.12px currentColor;transform:scaleY(0.9);">矿机</span>
<svg class="ic" style="left:260px;top:1235px;" width="8" height="11" viewBox="0 0 8 11"><path fill="#666" d="M6.9 1.75C6.9 1.67 6.86 1.6 6.8 1.54L6.32 1.09C6.26 1.04 6.18 1 6.1 1C6.02 1 5.94 1.04 5.88 1.09L1.4 5.29C1.34 5.35 1.3 5.43 1.3 5.5C1.3 5.57 1.34 5.65 1.4 5.71L5.88 9.91C5.94 9.96 6.02 10 6.1 10C6.18 10 6.26 9.96 6.32 9.91L6.8 9.46C6.86 9.4 6.9 9.32 6.9 9.25C6.9 9.18 6.86 9.1 6.8 9.04L3.02 5.5L6.8 1.96C6.86 1.9 6.9 1.82 6.9 1.75Z"/></svg>
<span class="t" style="top:89.40px;font-size:24px;line-height:34px;color:#2b2b2b;left:314.60px;">充币</span>
<span class="t" style="top:97.60px;font-size:15.4px;line-height:22px;color:#7a7a7a;left:375.00px;-webkit-text-stroke:0.12px currentColor;transform:scaleY(0.9);">列表</span>
<svg class="ic" style="left:2377px;top:97px;" width="16" height="13" viewBox="0 0 16 13"><path fill="#5160c2" d="M4.11 7.82C4.11 8.34 3.68 8.76 3.14 8.76C2.6 8.76 2.17 8.34 2.17 7.82C2.17 7.29 2.6 6.87 3.14 6.87C3.68 6.87 4.11 7.29 4.11 7.82ZM5.57 4.51C5.57 5.03 5.14 5.45 4.6 5.45C4.06 5.45 3.63 5.03 3.63 4.51C3.63 3.98 4.06 3.56 4.6 3.56C5.14 3.56 5.57 3.98 5.57 4.51ZM8.82 8.06C9.31 8.39 9.57 9 9.41 9.6C9.21 10.35 8.41 10.81 7.63 10.61C6.85 10.41 6.38 9.64 6.59 8.87C6.76 8.28 7.28 7.87 7.88 7.83L8.65 5C8.71 4.75 8.98 4.6 9.24 4.66C9.5 4.73 9.65 4.99 9.59 5.24ZM13.83 7.82C13.83 8.34 13.4 8.76 12.86 8.76C12.32 8.76 11.89 8.34 11.89 7.82C11.89 7.29 12.32 6.87 12.86 6.87C13.4 6.87 13.83 7.29 13.83 7.82ZM8.97 3.09C8.97 3.62 8.54 4.04 8 4.04C7.46 4.04 7.03 3.62 7.03 3.09C7.03 2.57 7.46 2.15 8 2.15C8.54 2.15 8.97 2.57 8.97 3.09ZM12.37 4.51C12.37 5.03 11.94 5.45 11.4 5.45C10.86 5.45 10.43 5.03 10.43 4.51C10.43 3.98 10.86 3.56 11.4 3.56C11.94 3.56 12.37 3.98 12.37 4.51ZM14.8 7.82C14.8 4.17 11.75 1.2 8 1.2C4.25 1.2 1.2 4.17 1.2 7.82C1.2 9.09 1.57 10.32 2.27 11.39C2.36 11.52 2.51 11.6 2.68 11.6H13.32C13.49 11.6 13.64 11.52 13.73 11.39C14.43 10.31 14.8 9.09 14.8 7.82Z"/></svg>
<span class="t" style="top:92.90px;font-size:14px;line-height:21px;color:#5160c2;left:2395.30px;-webkit-text-stroke:0.12px currentColor;transform:scaleY(0.9);">主页</span>
<span class="t" style="top:92.90px;font-size:14px;line-height:21px;color:#a0a6b8;left:2429.50px;">/</span>
<span class="t" style="top:92.90px;font-size:14px;line-height:21px;color:#5160c2;left:2444.20px;-webkit-text-stroke:0.12px currentColor;transform:scaleY(0.9);">充币记录</span>
<div class="b" style="left:315.20px;top:140.20px;width:84.60px;height:35.40px;border:1px solid #5c6bc6;border-radius:3px;box-shadow:0 3px 1px -2px rgba(0,0,0,.05),0 2px 2px 0 rgba(0,0,0,.05),0 1px 5px 0 rgba(0,0,0,.05);"></div>
<svg class="ic" style="left:331px;top:147px;" width="18" height="18" viewBox="0 0 18 18"><g transform="translate(1.65 1.85) scale(0.6000)" fill="none" stroke="#5160c2" stroke-width="1.8" stroke-linecap="round" stroke-linejoin="round"><polyline points="23 4 23 10 17 10"/><polyline points="1 20 1 14 7 14"/><path d="M3.51 9a9 9 0 0 1 14.85-3.36L23 10M1 14l4.64 4.36A9 9 0 0 0 20.49 15"/></g></svg>
<span class="t" style="top:145.90px;font-size:14px;line-height:21px;color:#5160c2;left:353.80px;-webkit-text-stroke:0.12px currentColor;transform:scaleY(0.9);">刷新</span>
<div class="b" style="left:407.10px;top:140.20px;width:83.70px;height:35.40px;border:1px solid #5c6bc6;border-radius:3px;box-shadow:0 3px 1px -2px rgba(0,0,0,.05),0 2px 2px 0 rgba(0,0,0,.05),0 1px 5px 0 rgba(0,0,0,.05);"></div>
<svg class="ic" style="left:423px;top:147px;" width="17" height="18" viewBox="0 0 17 18"><g transform="translate(1.30 1.65) scale(0.6000)" fill="none" stroke="#5160c2" stroke-width="1.8" stroke-linecap="round" stroke-linejoin="round"><polygon points="22 3 2 3 10 12.46 10 19 14 21 14 12.46 22 3"/></g></svg>
<span class="t" style="top:145.90px;font-size:14px;line-height:21px;color:#5160c2;left:445.60px;-webkit-text-stroke:0.12px currentColor;transform:scaleY(0.9);">筛选</span>
<div class="b" style="left:2231.40px;top:140.20px;width:105.40px;height:35.40px;border:1px solid #5c6bc6;border-radius:3px;box-shadow:0 3px 1px -2px rgba(0,0,0,.05),0 2px 2px 0 rgba(0,0,0,.05),0 1px 5px 0 rgba(0,0,0,.05);"></div>
<svg class="ic" style="left:2247px;top:148px;" width="18" height="18" viewBox="0 0 18 18"><g transform="translate(1.30 1.15) scale(0.6333)" fill="none" stroke="#5160c2" stroke-width="1.7" stroke-linecap="round" stroke-linejoin="round"><path d="M21 15v4a2 2 0 0 1-2 2H5a2 2 0 0 1-2-2v-4"/><polyline points="7 10 12 15 17 10"/><line x1="12" y1="15" x2="12" y2="3"/></g></svg>
<span class="t" style="top:146.50px;font-size:14px;line-height:21px;color:#5160c2;left:2270.20px;-webkit-text-stroke:0.12px currentColor;transform:scaleY(0.9);">导出</span>
<svg class="ic" style="left:2313px;top:148px;" width="19" height="19" viewBox="0 0 19 19"><g transform="translate(1.15 1.85) scale(0.6667)" fill="none" stroke="#5160c2" stroke-width="1.7" stroke-linecap="round" stroke-linejoin="round"><polyline points="6 9 12 15 18 9"/></g></svg>
<div class="b" style="left:2343.90px;top:140.20px;width:169.00px;height:35.40px;background:#fff;border-radius:2px;box-shadow:0 3px 1px -2px rgba(0,0,0,.05),0 2px 2px 0 rgba(0,0,0,.05),0 1px 5px 0 rgba(0,0,0,.05);"></div>
<span class="t" style="top:145.90px;font-size:14px;line-height:21px;color:#2c2c2c;left:2361.60px;-webkit-text-stroke:0.12px currentColor;transform:scaleY(0.9);">显示全部</span>
<span class="t" style="top:146.50px;font-size:14px;line-height:21px;color:#2c2c2c;left:2453.00px;-webkit-text-stroke:0.12px currentColor;transform:scaleY(0.9);">字段</span>
<svg class="ic" style="left:2489px;top:148px;" width="19" height="19" viewBox="0 0 19 19"><g transform="translate(1.35 1.85) scale(0.6667)" fill="none" stroke="#2c2c2c" stroke-width="1.7" stroke-linecap="round" stroke-linejoin="round"><polyline points="6 9 12 15 18 9"/></g></svg>
<div class="b" style="left:315.20px;top:186.20px;width:2197.70px;height:175.90px;background:#fff;border-radius:4px;box-shadow:0 2px 4px 0 rgba(0,0,0,.08);"></div>
<div class="b" style="left:336.20px;top:207.00px;width:68.70px;height:29.90px;background:#5c6bc6;border-radius:3px;box-shadow:0 3px 1px -2px rgba(0,0,0,.05),0 2px 2px 0 rgba(0,0,0,.05),0 1px 5px 0 rgba(0,0,0,.05);"></div>
<svg class="ic" style="left:348px;top:212px;" width="16" height="16" viewBox="0 0 16 16"><g transform="translate(1.20 1.95) scale(0.5375)" fill="none" stroke="#fff" stroke-width="2.9" stroke-linecap="round" stroke-linejoin="round"><circle cx="11" cy="11" r="8"/><line x1="21" y1="21" x2="16.65" y2="16.65"/></g></svg>
<span class="t" style="top:212.20px;font-size:11.9px;line-height:18px;color:#fff;left:367.70px;-webkit-text-stroke:0.40px currentColor;transform:scaleY(0.95);letter-spacing:0.819px;">搜索</span>
<div class="b" style="left:414.00px;top:207.00px;width:70.00px;height:29.90px;background:#fff;border-radius:0;box-shadow:0 3px 1px -2px rgba(0,0,0,.07),0 2px 2px 0 rgba(0,0,0,.07),0 1px 5px 0 rgba(0,0,0,.07);"></div>
<svg class="ic" style="left:426px;top:213px;" width="16" height="15" viewBox="0 0 16 15"><g transform="translate(1.95 1.20) scale(0.5167)" fill="none" stroke="#333" stroke-width="2.2" stroke-linecap="round" stroke-linejoin="round"><polyline points="1 4 1 10 7 10"/><path d="M3.51 15a9 9 0 1 0 2.13-9.36L1 10"/></g></svg>
<span class="t" style="top:212.20px;font-size:11.9px;line-height:18px;color:#2c2c2c;left:446.20px;-webkit-text-stroke:0.12px currentColor;transform:scaleY(0.95);letter-spacing:0.619px;">重置</span>
<div class="b" style="left:336.00px;top:251.00px;width:336.00px;height:30.00px;border:1px solid #dbe3e6;border-radius:4px;background:#fff;"></div>
<div class="b" style="left:375.00px;top:251.00px;width:1.00px;height:30.00px;background:#dbe3e6;"></div>
<span class="t" style="top:259.00px;font-size:9.8px;line-height:14px;color:#1f1f1f;left:347.30px;-webkit-text-stroke:0.42px currentColor;transform:scaleY(0.95);letter-spacing:-0.794px;">币名</span>
<span class="t" style="top:259.00px;font-size:9.8px;line-height:14px;color:#bcbcc4;left:386.90px;-webkit-text-stroke:0.12px currentColor;transform:scaleY(0.95);">币名</span>
<div class="b" style="left:700.00px;top:251.00px;width:700.00px;height:30.00px;border:1px solid #dbe3e6;border-radius:4px;background:#fff;"></div>
<div class="b" style="left:752.00px;top:251.00px;width:1.00px;height:30.00px;background:#dbe3e6;"></div>
<div class="b" style="left:1060.00px;top:251.00px;width:1.00px;height:30.00px;background:#dbe3e6;"></div>
<div class="b" style="left:1091.00px;top:251.00px;width:1.00px;height:30.00px;background:#dbe3e6;"></div>
<span class="t" style="top:259.00px;font-size:9.8px;line-height:14px;color:#1f1f1f;left:711.30px;-webkit-text-stroke:0.42px currentColor;transform:scaleY(0.95);letter-spacing:-0.594px;">日期</span>
<svg class="ic" style="left:732px;top:259px;" width="13" height="14" viewBox="0 0 13 14"><g transform="translate(1.20 1.65) scale(0.4333)" fill="none" stroke="#333" stroke-width="2.0" stroke-linecap="round" stroke-linejoin="round"><rect x="3" y="4" width="18" height="18" rx="2" ry="2"/><line x1="16" y1="2" x2="16" y2="6"/><line x1="8" y1="2" x2="8" y2="6"/><line x1="3" y1="10" x2="21" y2="10"/></g></svg>
<span class="t" style="top:259.00px;font-size:9.8px;line-height:14px;color:#bcbcc4;left:763.80px;-webkit-text-stroke:0.12px currentColor;transform:scaleY(0.95);">日期</span>
<span class="t" style="top:256.60px;font-size:9.8px;line-height:14px;color:#555;left:1070.80px;">To</span>
<span class="t" style="top:259.00px;font-size:9.8px;line-height:14px;color:#bcbcc4;left:1102.30px;-webkit-text-stroke:0.12px currentColor;transform:scaleY(0.95);">日期</span>
<div class="b" style="left:1428.00px;top:251.00px;width:336.00px;height:30.00px;border:1px solid #dbe3e6;border-radius:4px;background:#fff;"></div>
<div class="b" style="left:1466.00px;top:251.00px;width:1.00px;height:30.00px;background:#dbe3e6;"></div>
<span class="t" style="top:259.00px;font-size:9.8px;line-height:14px;color:#1f1f1f;left:1439.20px;font-weight:700;">UID</span>
<span class="t" style="top:259.00px;font-size:9.8px;line-height:14px;color:#bcbcc4;left:1476.80px;">UID</span>
<div class="b" style="left:1792.00px;top:251.00px;width:336.00px;height:30.00px;border:1px solid #dbe3e6;border-radius:4px;background:#fff;"></div>
<div class="b" style="left:1888.00px;top:251.00px;width:1.00px;height:30.00px;background:#dbe3e6;"></div>
<span class="t" style="top:259.00px;font-size:9.8px;line-height:14px;color:#1f1f1f;left:1803.20px;-webkit-text-stroke:0.42px currentColor;transform:scaleY(0.95);letter-spacing:0.321px;">用户名/手机/邮箱</span>
<span class="t" style="top:259.00px;font-size:9.8px;line-height:14px;color:#bcbcc4;left:1898.60px;-webkit-text-stroke:0.12px currentColor;transform:scaleY(0.95);">用户名/手机/邮箱</span>
<div class="b" style="left:2156.00px;top:251.00px;width:336.00px;height:31.00px;border:1px solid #dbe3e6;border-radius:4px;background:#fff;"></div>
<div class="b" style="left:2215.00px;top:251.00px;width:277.00px;height:31.00px;border:1px solid #dbe3e6;border-radius:4px;background:#fff;"></div>
<span class="t" style="top:259.10px;font-size:9.8px;line-height:14px;color:#1f1f1f;left:2167.00px;-webkit-text-stroke:0.42px currentColor;transform:scaleY(0.95);letter-spacing:-0.029px;">账户类型</span>
<span class="t" style="top:259.10px;font-size:9.8px;line-height:14px;color:#999;left:2226.00px;-webkit-text-stroke:0.12px currentColor;transform:scaleY(0.95);">选择</span>
<svg class="ic" style="left:2476px;top:261px" width="11" height="8" viewBox="0 0 11 8"><g transform="translate(1.10 1.10)"><path d="M0 0H8L4 5.2Z" fill="#888"/></g></svg>
<div class="b" style="left:336.00px;top:303.00px;width:336.00px;height:31.00px;border:1px solid #dbe3e6;border-radius:4px;background:#fff;"></div>
<div class="b" style="left:395.00px;top:303.00px;width:277.00px;height:31.00px;border:1px solid #dbe3e6;border-radius:4px;background:#fff;"></div>
<span class="t" style="top:311.10px;font-size:9.8px;line-height:14px;color:#1f1f1f;left:347.30px;-webkit-text-stroke:0.42px currentColor;transform:scaleY(0.95);letter-spacing:-0.029px;">充值类型</span>
<span class="t" style="top:311.10px;font-size:9.8px;line-height:14px;color:#999;left:406.30px;-webkit-text-stroke:0.12px currentColor;transform:scaleY(0.95);">选择</span>
<svg class="ic" style="left:656px;top:313px" width="11" height="8" viewBox="0 0 11 8"><g transform="translate(1.10 1.10)"><path d="M0 0H8L4 5.2Z" fill="#888"/></g></svg>
<div class="b" style="left:315.00px;top:370.00px;width:2198.00px;height:75.00px;background:#cbdaf0;border-radius:4px;box-shadow:0 2px 4px 0 rgba(0,0,0,.14);"></div>
<svg class="ic" style="left:330px;top:385px;" width="10" height="16" viewBox="0 0 10 16"><path fill="#3c6fd1" d="M8.9 12.85C8.9 12.51 8.58 12.23 8.2 12.23H7.5V6.66C7.5 6.33 7.18 6.05 6.8 6.05H2.6C2.22 6.05 1.9 6.33 1.9 6.66V7.9C1.9 8.24 2.22 8.52 2.6 8.52H3.3V12.23H2.6C2.22 12.23 1.9 12.51 1.9 12.85V14.08C1.9 14.42 2.22 14.7 2.6 14.7H8.2C8.58 14.7 8.9 14.42 8.9 14.08ZM7.5 1.72C7.5 1.38 7.18 1.1 6.8 1.1H4C3.62 1.1 3.3 1.38 3.3 1.72V3.57C3.3 3.91 3.62 4.19 4 4.19H6.8C7.18 4.19 7.5 3.91 7.5 3.57Z"/></svg>
<span class="t" style="top:380.80px;font-size:18.6px;line-height:26px;color:#3f73d3;left:348.20px;">统计</span>
<div class="b" style="left:332.00px;top:411.00px;width:90.60px;height:23.20px;background:#f6f7fb;border-radius:4px;box-shadow:0 1px 2px rgba(0,0,0,.09);"></div>
<span class="t" style="top:413.60px;font-size:12.6px;line-height:18px;color:#5464c2;left:337.30px;-webkit-text-stroke:0.12px currentColor;transform:scaleY(0.95);">总单数</span>
<span class="t" style="top:413.60px;font-size:12.6px;line-height:18px;color:#5464c2;left:371.70px;-webkit-text-stroke:0.12px currentColor;transform:scaleY(0.95);">：</span>
<span class="t" style="top:413.60px;font-size:12.6px;line-height:18px;color:#5464c2;left:392.60px;letter-spacing:0.192px;">105</span>
<div class="b" style="left:423.40px;top:411.00px;width:165.60px;height:23.20px;background:#f6f7fb;border-radius:4px;box-shadow:0 1px 2px rgba(0,0,0,.09);"></div>
<span class="t" style="top:413.60px;font-size:12.6px;line-height:18px;color:#5464c2;left:428.40px;letter-spacing:-0.632px;">USDT</span>
<span class="t" style="top:413.60px;font-size:12.6px;line-height:18px;color:#5464c2;left:461.40px;-webkit-text-stroke:0.12px currentColor;transform:scaleY(0.95);">金额</span>
<span class="t" style="top:413.60px;font-size:12.6px;line-height:18px;color:#5464c2;left:484.20px;-webkit-text-stroke:0.12px currentColor;transform:scaleY(0.95);">：</span>
<span class="t" style="top:413.60px;font-size:12.6px;line-height:18px;color:#5464c2;left:499.90px;letter-spacing:0.725px;">95415793616</span>
<div class="b" style="left:589.80px;top:411.00px;width:113.80px;height:23.20px;background:#f6f7fb;border-radius:4px;box-shadow:0 1px 2px rgba(0,0,0,.09);"></div>
<span class="t" style="top:413.60px;font-size:12.6px;line-height:18px;color:#5464c2;left:598.40px;letter-spacing:-0.944px;">ETH</span>
<span class="t" style="top:413.60px;font-size:12.6px;line-height:18px;color:#5464c2;left:622.30px;-webkit-text-stroke:0.12px currentColor;transform:scaleY(0.95);">金额</span>
<span class="t" style="top:413.60px;font-size:12.6px;line-height:18px;color:#5464c2;left:645.70px;-webkit-text-stroke:0.12px currentColor;transform:scaleY(0.95);">：</span>
<span class="t" style="top:413.60px;font-size:12.6px;line-height:18px;color:#5464c2;left:661.70px;letter-spacing:0.467px;">10000</span>
<div class="b" style="left:704.40px;top:411.00px;width:152.20px;height:23.20px;background:#f6f7fb;border-radius:4px;box-shadow:0 1px 2px rgba(0,0,0,.09);"></div>
<span class="t" style="top:413.60px;font-size:12.6px;line-height:18px;color:#5464c2;left:713.60px;letter-spacing:-0.794px;">BTC</span>
<span class="t" style="top:413.60px;font-size:12.6px;line-height:18px;color:#5464c2;left:737.60px;-webkit-text-stroke:0.12px currentColor;transform:scaleY(0.95);">金额</span>
<span class="t" style="top:413.60px;font-size:12.6px;line-height:18px;color:#5464c2;left:759.40px;-webkit-text-stroke:0.12px currentColor;transform:scaleY(0.95);">：</span>
<span class="t" style="top:413.60px;font-size:12.6px;line-height:18px;color:#5464c2;left:775.70px;letter-spacing:0.695px;">9535106665</span>
<div class="b" style="left:857.60px;top:411.00px;width:153.40px;height:23.20px;background:#f6f7fb;border-radius:4px;box-shadow:0 1px 2px rgba(0,0,0,.09);"></div>
<span class="t" style="top:413.60px;font-size:12.6px;line-height:18px;color:#5464c2;left:866.40px;letter-spacing:-0.565px;">AETC</span>
<span class="t" style="top:413.60px;font-size:12.6px;line-height:18px;color:#5464c2;left:898.60px;-webkit-text-stroke:0.12px currentColor;transform:scaleY(0.95);">金额</span>
<span class="t" style="top:413.60px;font-size:12.6px;line-height:18px;color:#5464c2;left:920.40px;-webkit-text-stroke:0.12px currentColor;transform:scaleY(0.95);">：</span>
<span class="t" style="top:413.60px;font-size:12.6px;line-height:18px;color:#5464c2;left:936.80px;letter-spacing:0.644px;">548600000</span>
<div class="b" style="left:328.00px;top:487.00px;width:17.00px;height:17.00px;border:2px solid #b6bec9;border-radius:2px;"></div>
<span class="t" style="top:485.00px;font-size:12.6px;line-height:18px;color:#30353d;left:406.60px;letter-spacing:-0.394px;">ID</span>
<svg class="ic" style="left:426px;top:486px" width="14" height="16" viewBox="0 0 14 16"><g transform="translate(1.00 1.00)"><path d="M6 12.1V1.7M2 5.7L6 1.6L10 5.7" fill="none" stroke="#8f98a8" stroke-width="1.15" stroke-linecap="round" stroke-linejoin="round"/></g></svg>
<span class="t" style="top:485.00px;font-size:12.6px;line-height:18px;color:#30353d;left:487.60px;letter-spacing:-0.052px;">UID</span>
<span class="t" style="top:485.00px;font-size:12.6px;line-height:18px;color:#30353d;left:578.80px;-webkit-text-stroke:0.50px currentColor;transform:scaleY(0.95);letter-spacing:0.075px;">用户名称</span>
<span class="t" style="top:485.00px;font-size:12.6px;line-height:18px;color:#30353d;left:842.20px;-webkit-text-stroke:0.50px currentColor;transform:scaleY(0.95);letter-spacing:0.212px;">姓名</span>
<span class="t" style="top:485.00px;font-size:12.6px;line-height:18px;color:#30353d;left:1000.60px;-webkit-text-stroke:0.50px currentColor;transform:scaleY(0.95);letter-spacing:0.212px;">币名</span>
<span class="t" style="top:485.00px;font-size:12.6px;line-height:18px;color:#30353d;left:1098.20px;-webkit-text-stroke:0.50px currentColor;transform:scaleY(0.95);letter-spacing:0.212px;">数量</span>
<span class="t" style="top:485.00px;font-size:12.6px;line-height:18px;color:#30353d;left:1368.00px;-webkit-text-stroke:0.50px currentColor;transform:scaleY(0.95);letter-spacing:0.075px;">账户类型</span>
<span class="t" style="top:485.00px;font-size:12.6px;line-height:18px;color:#30353d;left:1513.80px;-webkit-text-stroke:0.50px currentColor;transform:scaleY(0.95);letter-spacing:0.075px;">充值地址</span>
<span class="t" style="top:485.00px;font-size:12.6px;line-height:18px;color:#30353d;left:1914.20px;-webkit-text-stroke:0.50px currentColor;transform:scaleY(0.95);letter-spacing:0.075px;">充值类型</span>
<span class="t" style="top:485.00px;font-size:12.6px;line-height:18px;color:#30353d;left:2034.00px;-webkit-text-stroke:0.50px currentColor;transform:scaleY(0.95);letter-spacing:0.212px;">备注</span>
<span class="t" style="top:485.00px;font-size:12.6px;line-height:18px;color:#30353d;left:2107.80px;-webkit-text-stroke:0.50px currentColor;transform:scaleY(0.95);letter-spacing:0.212px;">日期</span>
<span class="t" style="top:485.00px;font-size:12.6px;line-height:18px;color:#30353d;left:2397.40px;-webkit-text-stroke:0.50px currentColor;transform:scaleY(0.95);letter-spacing:0.212px;">操作</span>
<div class="b" style="left:315.00px;top:525.00px;width:2198.00px;height:61.00px;background:#fff;border-radius:4px;box-shadow:0 2px 4px 0 rgba(0,0,0,.08);"></div>
<div class="b" style="left:329.00px;top:547.00px;width:17.00px;height:17.00px;border:2px solid #b6bec9;border-radius:2px;background:#fff;"></div>
<span class="t" style="top:544.60px;font-size:14px;line-height:21px;color:#414750;left:407.60px;letter-spacing:0.530px;">105</span>
<span class="t" style="top:544.60px;font-size:14px;line-height:21px;color:#414750;left:488.20px;letter-spacing:0.568px;">7032</span>
<span class="t" style="top:544.60px;font-size:14px;line-height:21px;color:#414750;left:579.40px;letter-spacing:0.623px;">555666888</span>
<span class="t" style="top:544.60px;font-size:14px;line-height:21px;color:#414750;left:842.40px;-webkit-text-stroke:0.12px currentColor;transform:scaleY(0.9);">俊哥</span>
<span class="t" style="top:544.60px;font-size:14px;line-height:21px;color:#414750;left:1001.00px;letter-spacing:-0.242px;">USDT</span>
<span class="t" style="top:544.60px;font-size:14px;line-height:21px;color:#414750;left:1098.80px;letter-spacing:0.554px;">1000.00000000</span>
<div class="b" style="left:1368.00px;top:545.00px;width:64.00px;height:23.00px;background:#5c6bc6;border-radius:3px;"></div>
<span class="t" style="top:546.70px;font-size:11.9px;line-height:16px;color:#fff;left:1375.70px;-webkit-text-stroke:0.45px currentColor;transform:scaleY(0.95);letter-spacing:0.546px;">账户资产</span>
<span class="t" style="top:544.60px;font-size:14px;line-height:21px;color:#414750;left:1514.60px;letter-spacing:0.403px;">0m79df69ccc45005765f...</span>
<svg class="ic" style="left:1692px;top:546px;" width="18" height="18" viewBox="0 0 18 18"><g transform="translate(1.15 1.65) scale(0.6250)" fill="none" stroke="#5160c2" stroke-width="2.3" stroke-linecap="round" stroke-linejoin="round"><polyline points="7 13 12 18 17 13"/><polyline points="7 6 12 11 17 6"/></g></svg>
<span class="t" style="top:544.60px;font-size:14px;line-height:21px;color:#414750;left:1914.40px;-webkit-text-stroke:0.12px currentColor;transform:scaleY(0.9);">在线</span>
<span class="t" style="top:544.60px;font-size:14px;line-height:21px;color:#414750;left:2108.40px;letter-spacing:0.897px;">2024-05-06</span>
<span class="t" style="top:544.60px;font-size:14px;line-height:21px;color:#414750;left:2193.10px;letter-spacing:0.257px;">18:02:39</span>
<div class="b" style="left:2398.00px;top:541.00px;width:51.00px;height:30.00px;border:1px solid #5c6bc6;border-radius:3px;background:#fff;"></div>
<span class="t" style="top:547.40px;font-size:11.9px;line-height:16px;color:#5160c2;left:2411.80px;-webkit-text-stroke:0.12px currentColor;transform:scaleY(0.95);">审核</span>
<div class="b" style="left:315.00px;top:597.00px;width:2198.00px;height:62.00px;background:#fff;border-radius:4px;box-shadow:0 2px 4px 0 rgba(0,0,0,.08);"></div>
<div class="b" style="left:329.00px;top:620.00px;width:17.00px;height:17.00px;border:2px solid #b6bec9;border-radius:2px;background:#fff;"></div>
<span class="t" style="top:616.60px;font-size:14px;line-height:21px;color:#414750;left:407.60px;letter-spacing:0.402px;">91</span>
<span class="t" style="top:616.60px;font-size:14px;line-height:21px;color:#414750;left:488.20px;letter-spacing:0.568px;">7037</span>
<span class="t" style="top:616.60px;font-size:14px;line-height:21px;color:#414750;left:579.40px;letter-spacing:0.604px;">234234</span>
<span class="t" style="top:616.60px;font-size:14px;line-height:21px;color:#414750;left:842.40px;-webkit-text-stroke:0.12px currentColor;transform:scaleY(0.9);">阿斯顿马丁</span>
<span class="t" style="top:616.60px;font-size:14px;line-height:21px;color:#414750;left:1001.00px;letter-spacing:-0.242px;">USDT</span>
<span class="t" style="top:616.60px;font-size:14px;line-height:21px;color:#414750;left:1098.80px;letter-spacing:0.638px;">11.00000000</span>
<div class="b" style="left:1368.00px;top:617.00px;width:64.00px;height:23.00px;background:#5c6bc6;border-radius:3px;"></div>
<span class="t" style="top:618.70px;font-size:11.9px;line-height:16px;color:#fff;left:1375.70px;-webkit-text-stroke:0.45px currentColor;transform:scaleY(0.95);letter-spacing:0.546px;">账户资产</span>
<span class="t" style="top:616.60px;font-size:14px;line-height:21px;color:#414750;left:1514.60px;letter-spacing:0.403px;">0m79df69ccc45005765f...</span>
<svg class="ic" style="left:1692px;top:618px;" width="18" height="18" viewBox="0 0 18 18"><g transform="translate(1.15 1.65) scale(0.6250)" fill="none" stroke="#5160c2" stroke-width="2.3" stroke-linecap="round" stroke-linejoin="round"><polyline points="7 13 12 18 17 13"/><polyline points="7 6 12 11 17 6"/></g></svg>
<span class="t" style="top:616.60px;font-size:14px;line-height:21px;color:#414750;left:1914.40px;-webkit-text-stroke:0.12px currentColor;transform:scaleY(0.9);">在线</span>
<span class="t" style="top:616.60px;font-size:14px;line-height:21px;color:#414750;left:2108.40px;letter-spacing:0.897px;">2022-10-28</span>
<span class="t" style="top:616.60px;font-size:14px;line-height:21px;color:#414750;left:2193.10px;letter-spacing:0.257px;">15:18:19</span>
<div class="b" style="left:2398.00px;top:613.00px;width:51.00px;height:30.00px;border:1px solid #5c6bc6;border-radius:3px;background:#fff;"></div>
<span class="t" style="top:619.40px;font-size:11.9px;line-height:16px;color:#5160c2;left:2411.80px;-webkit-text-stroke:0.12px currentColor;transform:scaleY(0.95);">审核</span>
<div class="b" style="left:315.00px;top:670.00px;width:2198.00px;height:61.00px;background:#fff;border-radius:4px;box-shadow:0 2px 4px 0 rgba(0,0,0,.08);"></div>
<div class="b" style="left:329.00px;top:692.00px;width:17.00px;height:17.00px;border:2px solid #b6bec9;border-radius:2px;background:#fff;"></div>
<span class="t" style="top:689.60px;font-size:14px;line-height:21px;color:#414750;left:407.60px;letter-spacing:0.402px;">90</span>
<span class="t" style="top:689.60px;font-size:14px;line-height:21px;color:#414750;left:488.20px;letter-spacing:0.568px;">7032</span>
<span class="t" style="top:689.60px;font-size:14px;line-height:21px;color:#414750;left:579.40px;letter-spacing:0.623px;">555666888</span>
<span class="t" style="top:689.60px;font-size:14px;line-height:21px;color:#414750;left:842.40px;-webkit-text-stroke:0.12px currentColor;transform:scaleY(0.9);">俊哥</span>
<span class="t" style="top:689.60px;font-size:14px;line-height:21px;color:#414750;left:1001.00px;letter-spacing:-0.242px;">USDT</span>
<span class="t" style="top:689.60px;font-size:14px;line-height:21px;color:#414750;left:1098.80px;letter-spacing:0.533px;">30.00000000</span>
<div class="b" style="left:1368.00px;top:690.00px;width:64.00px;height:23.00px;background:#5c6bc6;border-radius:3px;"></div>
<span class="t" style="top:691.70px;font-size:11.9px;line-height:16px;color:#fff;left:1375.70px;-webkit-text-stroke:0.45px currentColor;transform:scaleY(0.95);letter-spacing:0.546px;">账户资产</span>
<span class="t" style="top:689.60px;font-size:14px;line-height:21px;color:#414750;left:1514.60px;letter-spacing:0.403px;">0m79df69ccc45005765f...</span>
<svg class="ic" style="left:1692px;top:691px;" width="18" height="18" viewBox="0 0 18 18"><g transform="translate(1.15 1.65) scale(0.6250)" fill="none" stroke="#5160c2" stroke-width="2.3" stroke-linecap="round" stroke-linejoin="round"><polyline points="7 13 12 18 17 13"/><polyline points="7 6 12 11 17 6"/></g></svg>
<span class="t" style="top:689.60px;font-size:14px;line-height:21px;color:#414750;left:1914.40px;-webkit-text-stroke:0.12px currentColor;transform:scaleY(0.9);">在线</span>
<span class="t" style="top:689.60px;font-size:14px;line-height:21px;color:#414750;left:2108.40px;letter-spacing:0.897px;">2022-10-02</span>
<span class="t" style="top:689.60px;font-size:14px;line-height:21px;color:#414750;left:2193.10px;letter-spacing:0.257px;">15:28:20</span>
<div class="b" style="left:2398.00px;top:686.00px;width:51.00px;height:30.00px;border:1px solid #5c6bc6;border-radius:3px;background:#fff;"></div>
<span class="t" style="top:692.40px;font-size:11.9px;line-height:16px;color:#5160c2;left:2411.80px;-webkit-text-stroke:0.12px currentColor;transform:scaleY(0.95);">审核</span>
<div class="b" style="left:315.00px;top:742.00px;width:2198.00px;height:62.00px;background:#fff;border-radius:4px;box-shadow:0 2px 4px 0 rgba(0,0,0,.08);"></div>
<div class="b" style="left:329.00px;top:765.00px;width:17.00px;height:17.00px;border:2px solid #b6bec9;border-radius:2px;background:#fff;"></div>
<span class="t" style="top:761.60px;font-size:14px;line-height:21px;color:#414750;left:407.60px;letter-spacing:0.402px;">89</span>
<span class="t" style="top:761.60px;font-size:14px;line-height:21px;color:#414750;left:488.20px;letter-spacing:0.568px;">7032</span>
<span class="t" style="top:761.60px;font-size:14px;line-height:21px;color:#414750;left:579.40px;letter-spacing:0.623px;">555666888</span>
<span class="t" style="top:761.60px;font-size:14px;line-height:21px;color:#414750;left:842.40px;-webkit-text-stroke:0.12px currentColor;transform:scaleY(0.9);">俊哥</span>
<span class="t" style="top:761.60px;font-size:14px;line-height:21px;color:#414750;left:1001.00px;letter-spacing:-0.242px;">USDT</span>
<span class="t" style="top:761.60px;font-size:14px;line-height:21px;color:#414750;left:1098.80px;letter-spacing:0.545px;">400.00000000</span>
<div class="b" style="left:1368.00px;top:762.00px;width:64.00px;height:23.00px;background:#5c6bc6;border-radius:3px;"></div>
<span class="t" style="top:763.70px;font-size:11.9px;line-height:16px;color:#fff;left:1375.70px;-webkit-text-stroke:0.45px currentColor;transform:scaleY(0.95);letter-spacing:0.546px;">账户资产</span>
<span class="t" style="top:761.60px;font-size:14px;line-height:21px;color:#414750;left:1514.60px;letter-spacing:0.186px;">TQ1zh2bj8apbT75Avz5s...</span>
<svg class="ic" style="left:1691px;top:763px;" width="18" height="18" viewBox="0 0 18 18"><g transform="translate(1.75 1.65) scale(0.6250)" fill="none" stroke="#5160c2" stroke-width="2.3" stroke-linecap="round" stroke-linejoin="round"><polyline points="7 13 12 18 17 13"/><polyline points="7 6 12 11 17 6"/></g></svg>
<span class="t" style="top:761.60px;font-size:14px;line-height:21px;color:#414750;left:1914.40px;-webkit-text-stroke:0.12px currentColor;transform:scaleY(0.9);">在线</span>
<span class="t" style="top:761.60px;font-size:14px;line-height:21px;color:#414750;left:2108.40px;letter-spacing:0.897px;">2022-10-02</span>
<span class="t" style="top:761.60px;font-size:14px;line-height:21px;color:#414750;left:2193.10px;letter-spacing:0.257px;">15:13:17</span>
<div class="b" style="left:2398.00px;top:758.00px;width:51.00px;height:30.00px;border:1px solid #5c6bc6;border-radius:3px;background:#fff;"></div>
<span class="t" style="top:764.40px;font-size:11.9px;line-height:16px;color:#5160c2;left:2411.80px;-webkit-text-stroke:0.12px currentColor;transform:scaleY(0.95);">审核</span>
<div class="b" style="left:315.00px;top:815.00px;width:2198.00px;height:61.00px;background:#fff;border-radius:4px;box-shadow:0 2px 4px 0 rgba(0,0,0,.08);"></div>
<div class="b" style="left:329.00px;top:837.00px;width:17.00px;height:17.00px;border:2px solid #b6bec9;border-radius:2px;background:#fff;"></div>
<span class="t" style="top:833.60px;font-size:14px;line-height:21px;color:#414750;left:407.60px;letter-spacing:0.402px;">88</span>
<span class="t" style="top:833.60px;font-size:14px;line-height:21px;color:#414750;left:488.20px;letter-spacing:0.568px;">7032</span>
<span class="t" style="top:833.60px;font-size:14px;line-height:21px;color:#414750;left:579.40px;letter-spacing:0.623px;">555666888</span>
<span class="t" style="top:833.60px;font-size:14px;line-height:21px;color:#414750;left:842.40px;-webkit-text-stroke:0.12px currentColor;transform:scaleY(0.9);">俊哥</span>
<span class="t" style="top:833.60px;font-size:14px;line-height:21px;color:#414750;left:1001.00px;letter-spacing:-0.242px;">USDT</span>
<span class="t" style="top:833.60px;font-size:14px;line-height:21px;color:#414750;left:1098.80px;letter-spacing:0.545px;">500.00000000</span>
<div class="b" style="left:1368.00px;top:834.00px;width:64.00px;height:23.00px;background:#5c6bc6;border-radius:3px;"></div>
<span class="t" style="top:835.70px;font-size:11.9px;line-height:16px;color:#fff;left:1375.70px;-webkit-text-stroke:0.45px currentColor;transform:scaleY(0.95);letter-spacing:0.546px;">账户资产</span>
<span class="t" style="top:833.60px;font-size:14px;line-height:21px;color:#414750;left:1514.60px;letter-spacing:0.186px;">TQ1zh2bj8apbT75Avz5s...</span>
<svg class="ic" style="left:1691px;top:835px;" width="18" height="18" viewBox="0 0 18 18"><g transform="translate(1.75 1.65) scale(0.6250)" fill="none" stroke="#5160c2" stroke-width="2.3" stroke-linecap="round" stroke-linejoin="round"><polyline points="7 13 12 18 17 13"/><polyline points="7 6 12 11 17 6"/></g></svg>
<span class="t" style="top:833.60px;font-size:14px;line-height:21px;color:#414750;left:1914.40px;-webkit-text-stroke:0.12px currentColor;transform:scaleY(0.9);">在线</span>
<span class="t" style="top:833.60px;font-size:14px;line-height:21px;color:#414750;left:2108.40px;letter-spacing:0.897px;">2022-10-02</span>
<span class="t" style="top:833.60px;font-size:14px;line-height:21px;color:#414750;left:2193.10px;letter-spacing:0.257px;">15:13:08</span>
<div class="b" style="left:2398.00px;top:830.00px;width:51.00px;height:30.00px;border:1px solid #5c6bc6;border-radius:3px;background:#fff;"></div>
<span class="t" style="top:836.40px;font-size:11.9px;line-height:16px;color:#5160c2;left:2411.80px;-webkit-text-stroke:0.12px currentColor;transform:scaleY(0.95);">审核</span>
<div class="b" style="left:315.00px;top:887.00px;width:2198.00px;height:61.00px;background:#fff;border-radius:4px;box-shadow:0 2px 4px 0 rgba(0,0,0,.08);"></div>
<div class="b" style="left:329.00px;top:909.00px;width:17.00px;height:17.00px;border:2px solid #b6bec9;border-radius:2px;background:#fff;"></div>
<span class="t" style="top:906.60px;font-size:14px;line-height:21px;color:#414750;left:407.60px;letter-spacing:0.402px;">87</span>
<span class="t" style="top:906.60px;font-size:14px;line-height:21px;color:#414750;left:488.20px;letter-spacing:0.568px;">7032</span>
<span class="t" style="top:906.60px;font-size:14px;line-height:21px;color:#414750;left:579.40px;letter-spacing:0.623px;">555666888</span>
<span class="t" style="top:906.60px;font-size:14px;line-height:21px;color:#414750;left:842.40px;-webkit-text-stroke:0.12px currentColor;transform:scaleY(0.9);">俊哥</span>
<span class="t" style="top:906.60px;font-size:14px;line-height:21px;color:#414750;left:1001.00px;letter-spacing:-0.242px;">USDT</span>
<span class="t" style="top:906.60px;font-size:14px;line-height:21px;color:#414750;left:1098.80px;letter-spacing:0.562px;">10000.00000000</span>
<div class="b" style="left:1368.00px;top:907.00px;width:64.00px;height:23.00px;background:#5c6bc6;border-radius:3px;"></div>
<span class="t" style="top:908.70px;font-size:11.9px;line-height:16px;color:#fff;left:1375.70px;-webkit-text-stroke:0.45px currentColor;transform:scaleY(0.95);letter-spacing:0.546px;">账户资产</span>
<span class="t" style="top:906.60px;font-size:14px;line-height:21px;color:#414750;left:1514.60px;letter-spacing:0.186px;">TQ1zh2bj8apbT75Avz5s...</span>
<svg class="ic" style="left:1691px;top:908px;" width="18" height="18" viewBox="0 0 18 18"><g transform="translate(1.75 1.65) scale(0.6250)" fill="none" stroke="#5160c2" stroke-width="2.3" stroke-linecap="round" stroke-linejoin="round"><polyline points="7 13 12 18 17 13"/><polyline points="7 6 12 11 17 6"/></g></svg>
<span class="t" style="top:906.60px;font-size:14px;line-height:21px;color:#414750;left:1914.40px;-webkit-text-stroke:0.12px currentColor;transform:scaleY(0.9);">在线</span>
<span class="t" style="top:906.60px;font-size:14px;line-height:21px;color:#414750;left:2108.40px;letter-spacing:0.897px;">2022-10-01</span>
<span class="t" style="top:906.60px;font-size:14px;line-height:21px;color:#414750;left:2193.10px;letter-spacing:0.257px;">20:49:43</span>
<div class="b" style="left:2398.00px;top:903.00px;width:51.00px;height:30.00px;border:1px solid #5c6bc6;border-radius:3px;background:#fff;"></div>
<span class="t" style="top:909.40px;font-size:11.9px;line-height:16px;color:#5160c2;left:2411.80px;-webkit-text-stroke:0.12px currentColor;transform:scaleY(0.95);">审核</span>
<div class="b" style="left:315.00px;top:959.00px;width:2198.00px;height:62.00px;background:#fff;border-radius:4px;box-shadow:0 2px 4px 0 rgba(0,0,0,.08);"></div>
<div class="b" style="left:329.00px;top:982.00px;width:17.00px;height:17.00px;border:2px solid #b6bec9;border-radius:2px;background:#fff;"></div>
<span class="t" style="top:978.60px;font-size:14px;line-height:21px;color:#414750;left:407.60px;letter-spacing:0.402px;">69</span>
<span class="t" style="top:978.60px;font-size:14px;line-height:21px;color:#414750;left:488.20px;letter-spacing:0.568px;">7032</span>
<span class="t" style="top:978.60px;font-size:14px;line-height:21px;color:#414750;left:579.40px;letter-spacing:0.623px;">555666888</span>
<span class="t" style="top:978.60px;font-size:14px;line-height:21px;color:#414750;left:842.40px;-webkit-text-stroke:0.12px currentColor;transform:scaleY(0.9);">俊哥</span>
<span class="t" style="top:978.60px;font-size:14px;line-height:21px;color:#414750;left:1001.00px;letter-spacing:-0.242px;">USDT</span>
<span class="t" style="top:978.60px;font-size:14px;line-height:21px;color:#414750;left:1098.80px;letter-spacing:0.562px;">20000.00000000</span>
<div class="b" style="left:1368.00px;top:979.00px;width:64.00px;height:23.00px;background:#5c6bc6;border-radius:3px;"></div>
<span class="t" style="top:980.70px;font-size:11.9px;line-height:16px;color:#fff;left:1375.70px;-webkit-text-stroke:0.45px currentColor;transform:scaleY(0.95);letter-spacing:0.546px;">账户资产</span>
<span class="t" style="top:978.60px;font-size:14px;line-height:21px;color:#414750;left:1514.60px;letter-spacing:0.060px;">899AuTBFJWo1Rx1aoBxS...</span>
<svg class="ic" style="left:1703px;top:980px;" width="18" height="18" viewBox="0 0 18 18"><g transform="translate(1.75 1.65) scale(0.6250)" fill="none" stroke="#5160c2" stroke-width="2.3" stroke-linecap="round" stroke-linejoin="round"><polyline points="7 13 12 18 17 13"/><polyline points="7 6 12 11 17 6"/></g></svg>
<span class="t" style="top:978.60px;font-size:14px;line-height:21px;color:#414750;left:1914.40px;-webkit-text-stroke:0.12px currentColor;transform:scaleY(0.9);">在线</span>
<span class="t" style="top:978.60px;font-size:14px;line-height:21px;color:#414750;left:2108.40px;letter-spacing:0.897px;">2022-09-13</span>
<span class="t" style="top:978.60px;font-size:14px;line-height:21px;color:#414750;left:2193.10px;letter-spacing:0.257px;">16:09:44</span>
<div class="b" style="left:2398.00px;top:975.00px;width:51.00px;height:30.00px;border:1px solid #5c6bc6;border-radius:3px;background:#fff;"></div>
<span class="t" style="top:981.40px;font-size:11.9px;line-height:16px;color:#5160c2;left:2411.80px;-webkit-text-stroke:0.12px currentColor;transform:scaleY(0.95);">审核</span>
<div class="b" style="left:315.00px;top:1032.00px;width:2198.00px;height:61.00px;background:#fff;border-radius:4px;box-shadow:0 2px 4px 0 rgba(0,0,0,.08);"></div>
<div class="b" style="left:329.00px;top:1054.00px;width:17.00px;height:17.00px;border:2px solid #b6bec9;border-radius:2px;background:#fff;"></div>
<span class="t" style="top:1050.60px;font-size:14px;line-height:21px;color:#414750;left:407.60px;letter-spacing:0.402px;">60</span>
<span class="t" style="top:1050.60px;font-size:14px;line-height:21px;color:#414750;left:488.20px;letter-spacing:0.568px;">7032</span>
<span class="t" style="top:1050.60px;font-size:14px;line-height:21px;color:#414750;left:579.40px;letter-spacing:0.623px;">555666888</span>
<span class="t" style="top:1050.60px;font-size:14px;line-height:21px;color:#414750;left:842.40px;-webkit-text-stroke:0.12px currentColor;transform:scaleY(0.9);">俊哥</span>
<span class="t" style="top:1050.60px;font-size:14px;line-height:21px;color:#414750;left:1001.00px;letter-spacing:-0.242px;">USDT</span>
<span class="t" style="top:1050.60px;font-size:14px;line-height:21px;color:#414750;left:1098.80px;letter-spacing:0.574px;">9999999.00000000</span>
<div class="b" style="left:1368.00px;top:1051.00px;width:64.00px;height:23.00px;background:#5c6bc6;border-radius:3px;"></div>
<span class="t" style="top:1052.70px;font-size:11.9px;line-height:16px;color:#fff;left:1375.70px;-webkit-text-stroke:0.45px currentColor;transform:scaleY(0.95);letter-spacing:0.546px;">账户资产</span>
<span class="t" style="top:1050.60px;font-size:14px;line-height:21px;color:#414750;left:1514.60px;letter-spacing:-0.144px;">123erceUfgccACYJaTx1...</span>
<svg class="ic" style="left:1683px;top:1052px;" width="18" height="18" viewBox="0 0 18 18"><g transform="translate(1.95 1.65) scale(0.6250)" fill="none" stroke="#5160c2" stroke-width="2.3" stroke-linecap="round" stroke-linejoin="round"><polyline points="7 13 12 18 17 13"/><polyline points="7 6 12 11 17 6"/></g></svg>
<span class="t" style="top:1050.60px;font-size:14px;line-height:21px;color:#414750;left:1914.40px;-webkit-text-stroke:0.12px currentColor;transform:scaleY(0.9);">在线</span>
<span class="t" style="top:1050.60px;font-size:14px;line-height:21px;color:#414750;left:2108.40px;letter-spacing:0.897px;">2022-08-03</span>
<span class="t" style="top:1050.60px;font-size:14px;line-height:21px;color:#414750;left:2193.10px;letter-spacing:0.257px;">20:41:40</span>
<div class="b" style="left:2398.00px;top:1047.00px;width:51.00px;height:30.00px;border:1px solid #5c6bc6;border-radius:3px;background:#fff;"></div>
<span class="t" style="top:1053.40px;font-size:11.9px;line-height:16px;color:#5160c2;left:2411.80px;-webkit-text-stroke:0.12px currentColor;transform:scaleY(0.95);">审核</span>
<div class="b" style="left:315.00px;top:1104.00px;width:2198.00px;height:61.00px;background:#fff;border-radius:4px;box-shadow:0 2px 4px 0 rgba(0,0,0,.08);"></div>
<div class="b" style="left:329.00px;top:1126.00px;width:17.00px;height:17.00px;border:2px solid #b6bec9;border-radius:2px;background:#fff;"></div>
<span class="t" style="top:1123.60px;font-size:14px;line-height:21px;color:#414750;left:407.60px;letter-spacing:0.402px;">55</span>
<span class="t" style="top:1123.60px;font-size:14px;line-height:21px;color:#414750;left:488.20px;letter-spacing:0.568px;">7035</span>
<span class="t" style="top:1123.60px;font-size:14px;line-height:21px;color:#414750;left:579.40px;letter-spacing:0.604px;">469469</span>
<span class="t" style="top:1123.60px;font-size:14px;line-height:21px;color:#414750;left:1001.00px;letter-spacing:-0.242px;">USDT</span>
<span class="t" style="top:1123.60px;font-size:14px;line-height:21px;color:#414750;left:1098.80px;letter-spacing:0.533px;">33.00000000</span>
<div class="b" style="left:1368.00px;top:1124.00px;width:64.00px;height:23.00px;background:#5c6bc6;border-radius:3px;"></div>
<span class="t" style="top:1125.70px;font-size:11.9px;line-height:16px;color:#fff;left:1375.70px;-webkit-text-stroke:0.45px currentColor;transform:scaleY(0.95);letter-spacing:0.546px;">账户资产</span>
<span class="t" style="top:1123.60px;font-size:14px;line-height:21px;color:#414750;left:1514.60px;letter-spacing:-0.144px;">123erceUfgccACYJaTx1...</span>
<svg class="ic" style="left:1683px;top:1125px;" width="18" height="18" viewBox="0 0 18 18"><g transform="translate(1.95 1.65) scale(0.6250)" fill="none" stroke="#5160c2" stroke-width="2.3" stroke-linecap="round" stroke-linejoin="round"><polyline points="7 13 12 18 17 13"/><polyline points="7 6 12 11 17 6"/></g></svg>
<span class="t" style="top:1123.60px;font-size:14px;line-height:21px;color:#414750;left:1914.40px;-webkit-text-stroke:0.12px currentColor;transform:scaleY(0.9);">在线</span>
<span class="t" style="top:1123.60px;font-size:14px;line-height:21px;color:#414750;left:2108.40px;letter-spacing:0.897px;">2022-07-24</span>
<span class="t" style="top:1123.60px;font-size:14px;line-height:21px;color:#414750;left:2193.10px;letter-spacing:0.257px;">10:29:15</span>
<div class="b" style="left:2398.00px;top:1120.00px;width:51.00px;height:30.00px;border:1px solid #5c6bc6;border-radius:3px;background:#fff;"></div>
<span class="t" style="top:1126.40px;font-size:11.9px;line-height:16px;color:#5160c2;left:2411.80px;-webkit-text-stroke:0.12px currentColor;transform:scaleY(0.95);">审核</span>
<div class="b" style="left:315.00px;top:1176.00px;width:2198.00px;height:62.00px;background:#fff;border-radius:4px;box-shadow:0 2px 4px 0 rgba(0,0,0,.08);"></div>
<div class="b" style="left:329.00px;top:1199.00px;width:17.00px;height:17.00px;border:2px solid #b6bec9;border-radius:2px;background:#fff;"></div>
<span class="t" style="top:1195.60px;font-size:14px;line-height:21px;color:#414750;left:407.60px;letter-spacing:0.402px;">54</span>
<span class="t" style="top:1195.60px;font-size:14px;line-height:21px;color:#414750;left:488.20px;letter-spacing:0.568px;">7021</span>
<span class="t" style="top:1195.60px;font-size:14px;line-height:21px;color:#414750;left:579.40px;letter-spacing:0.327px;">22334455@qq.com</span>
<span class="t" style="top:1195.60px;font-size:14px;line-height:21px;color:#414750;left:1001.00px;letter-spacing:-0.242px;">USDT</span>
<span class="t" style="top:1195.60px;font-size:14px;line-height:21px;color:#414750;left:1098.80px;letter-spacing:0.533px;">55.00000000</span>
<div class="b" style="left:1368.00px;top:1196.00px;width:64.00px;height:23.00px;background:#5c6bc6;border-radius:3px;"></div>
<span class="t" style="top:1197.70px;font-size:11.9px;line-height:16px;color:#fff;left:1375.70px;-webkit-text-stroke:0.45px currentColor;transform:scaleY(0.95);letter-spacing:0.546px;">账户资产</span>
<span class="t" style="top:1195.60px;font-size:14px;line-height:21px;color:#414750;left:1514.60px;letter-spacing:-0.144px;">123erceUfgccACYJaTx1...</span>
<svg class="ic" style="left:1683px;top:1197px;" width="18" height="18" viewBox="0 0 18 18"><g transform="translate(1.95 1.65) scale(0.6250)" fill="none" stroke="#5160c2" stroke-width="2.3" stroke-linecap="round" stroke-linejoin="round"><polyline points="7 13 12 18 17 13"/><polyline points="7 6 12 11 17 6"/></g></svg>
<span class="t" style="top:1195.60px;font-size:14px;line-height:21px;color:#414750;left:1914.40px;-webkit-text-stroke:0.12px currentColor;transform:scaleY(0.9);">在线</span>
<span class="t" style="top:1195.60px;font-size:14px;line-height:21px;color:#414750;left:2108.40px;letter-spacing:0.897px;">2022-07-24</span>
<span class="t" style="top:1195.60px;font-size:14px;line-height:21px;color:#414750;left:2193.10px;letter-spacing:0.257px;">10:20:03</span>
<div class="b" style="left:2398.00px;top:1192.00px;width:51.00px;height:30.00px;border:1px solid #5c6bc6;border-radius:3px;background:#fff;"></div>
<span class="t" style="top:1198.40px;font-size:11.9px;line-height:16px;color:#5160c2;left:2411.80px;-webkit-text-stroke:0.12px currentColor;transform:scaleY(0.95);">审核</span>
<div class="b" style="left:315.00px;top:1249.00px;width:2198.00px;height:61.00px;background:#fff;border-radius:4px;box-shadow:0 2px 4px 0 rgba(0,0,0,.08);"></div>
<div class="b" style="left:2548.00px;top:0.00px;width:12.00px;height:1263.00px;background:#eeeeee;z-index:9;"></div>
<div class="b" style="left:2548.00px;top:1.00px;width:12.00px;height:781.00px;background:#c8c8c8;border-radius:6px;z-index:10;"></div>
</body></html>
